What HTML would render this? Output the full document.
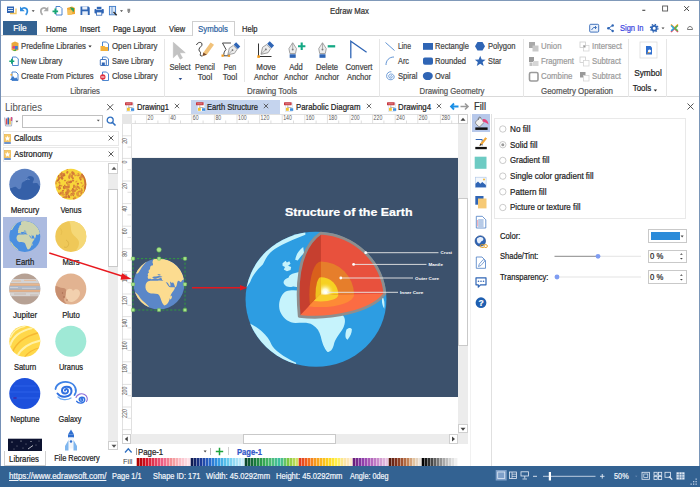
<!DOCTYPE html>
<html><head><meta charset="utf-8"><title>Edraw Max</title>
<style>
html,body{margin:0;padding:0}
body{width:700px;height:487px;position:relative;overflow:hidden;background:#fff;font-family:"Liberation Sans",sans-serif}
.t{position:absolute;white-space:nowrap;display:block;-webkit-text-stroke:.22px currentColor}
.b{position:absolute;display:block;overflow:visible}
</style></head><body>
<div class="b" style="left:0px;top:0px;width:700px;height:1.2px;background:#8099b9;"></div>
<div class="b" style="left:0px;top:0px;width:1.3px;height:487px;background:#7590b6;"></div>
<div class="b" style="left:698.8px;top:0px;width:1.2px;height:487px;background:#7a96b8;"></div>
<svg class="b" style="left:0px;top:0.7px;" width="140" height="20" viewBox="0 0 140 20">
<g>
<rect x="7" y="5.5" width="7" height="6.5" fill="#2f65b5"/><rect x="8" y="7" width="5" height="1" fill="#cfe0f5"/><rect x="8" y="9" width="5" height="1" fill="#cfe0f5"/>
<path d="M10 12.5h6v-5" fill="none" stroke="#f2c45a" stroke-width="1.3"/>
<path d="M21.2 8.2c3-2.6 7-1 6 3.2c-.3 1.2-1 2-1.6 2.4" fill="none" stroke="#2f8de0" stroke-width="1.7"/><path d="M20 5.5v4.8h4.8z" fill="#2f8de0"/>
<path d="M31.7 9.3h3l-1.5 1.8z" fill="#444"/>
<path d="M47 8.2c-3-2.6-7-1-6 3.2c.3 1.2 1 2 1.6 2.4" fill="none" stroke="#a9a9a9" stroke-width="1.7"/><path d="M48.3 5.5v4.8h-4.8z" fill="#a9a9a9"/>
<path d="M56 5.5h4l2 2v6.5h-6z" fill="#fff" stroke="#3a78c8" stroke-width=".9"/><path d="M52.5 10.3h5.6M55.3 7.5v5.6" stroke="#17a673" stroke-width="1.7"/>
<path d="M67 7l5-1.5l3 1.5v6l-7 1z" fill="#f0a732"/><path d="M70 6l4 1.2v3.5l-2-.4z" fill="#2aa05a"/><path d="M67.5 8.5l5 1l-.5 4l-4.500.6z" fill="#f6c25c"/>
<path d="M80.500 5.500h8l1.200 1.200v7.300h-9.200z" fill="#2f65b5"/><rect x="82.300" y="5.500" width="5" height="3" fill="#e9f0fa"/><rect x="82.300" y="10.300" width="5.500" height="3.700" fill="#e9f0fa"/>
<rect x="94.500" y="8" width="9.300" height="4.500" rx=".8" fill="#2f65b5"/><rect x="96.500" y="5.500" width="5.300" height="3" fill="#2f65b5" stroke="#fff" stroke-width=".6"/><rect x="96.500" y="11" width="5.300" height="3.200" fill="#fff" stroke="#2f65b5" stroke-width=".8"/>
<rect x="109.400" y="5.400" width="6.200" height="8.400" fill="#dbe7f6" stroke="#3a78c8" stroke-width=".9"/><path d="M112 6v7" stroke="#3a78c8" stroke-width=".7"/><path d="M113.500 11l3.200 3.200" stroke="#2b2b2b" stroke-width="1.400"/>
<path d="M120 9.300h3l-1.500 1.800z" fill="#444"/>
<path d="M127.400 8.300h2.800M127.400 9.700h2.800" stroke="#444" stroke-width=".8"/><path d="M127.300 10.600h3l-1.500 1.500z" fill="#444"/>
</g></svg>
<span class="t" style="left:330.00px;top:4.94px;font-size:9px;line-height:12px;color:#333;transform-origin:0 50%;transform:scaleX(0.8664);">Edraw Max</span>
<svg class="b" style="left:636px;top:0px;" width="64" height="20" viewBox="0 0 64 20"><path d="M6.300 10.300h3" stroke="#444" stroke-width="1.100"/><rect x="26.600" y="6" width="5" height="5" fill="none" stroke="#555" stroke-width=".9"/><path d="M48.200 6.200l4.800 4.800M53 6.200l-4.800 4.800" stroke="#444" stroke-width="1"/></svg>
<div class="b" style="left:2.5px;top:21px;width:34.5px;height:14.5px;background:#336292;"></div>
<span class="t" style="left:19.70px;top:22.44px;font-size:9px;line-height:12px;color:#fff;transform:translateX(-50%) scaleX(0.9309);">File</span>
<span class="t" style="left:46.00px;top:22.54px;font-size:9px;line-height:12px;color:#2a2a2a;transform-origin:0 50%;transform:scaleX(0.8622);">Home</span>
<span class="t" style="left:80.40px;top:22.54px;font-size:9px;line-height:12px;color:#2a2a2a;transform-origin:0 50%;transform:scaleX(0.8841);">Insert</span>
<span class="t" style="left:113.30px;top:22.54px;font-size:9px;line-height:12px;color:#2a2a2a;transform-origin:0 50%;transform:scaleX(0.8448);">Page Layout</span>
<span class="t" style="left:168.80px;top:22.54px;font-size:9px;line-height:12px;color:#2a2a2a;transform-origin:0 50%;transform:scaleX(0.8374);">View</span>
<span class="t" style="left:241.50px;top:22.54px;font-size:9px;line-height:12px;color:#2a2a2a;transform-origin:0 50%;transform:scaleX(0.8374);">Help</span>
<div class="b" style="left:1.2px;top:35.3px;width:697.6px;height:62.2px;background:#fff;border:1px solid #d9d9d9;box-sizing:border-box;border-left:none;border-right:none"></div>
<div class="b" style="left:191.8px;top:21px;width:43.4px;height:15.4px;background:#fff;border:1px solid #cfcfcf;box-sizing:border-box;border-bottom:none"></div>
<span class="t" style="left:198.00px;top:22.54px;font-size:9px;line-height:12px;color:#2c5fa0;transform-origin:0 50%;transform:scaleX(0.8693);">Symbols</span>
<svg class="b" style="left:592px;top:21px;" width="108" height="15" viewBox="0 0 108 15">
<rect x="-2.300" y="3.300" width="9" height="7.800" rx="1" fill="#eaf1fb" stroke="#2f65b5" stroke-width=".9"/><path d="M-.5 9l2-2.500h2.500M3 5l1.500 1.500l-1.500 1.500" fill="none" stroke="#2f65b5" stroke-width=".9"/>
<path d="M20.500 4.500l-4 2.700l4 2.700" fill="none" stroke="#2f65b5" stroke-width=".9"/><circle cx="20.700" cy="4.500" r="1.200" fill="#2f65b5"/><circle cx="16.300" cy="7.200" r="1.200" fill="#2f65b5"/><circle cx="20.700" cy="10" r="1.200" fill="#2f65b5"/>
<circle cx="62.200" cy="7.200" r="2.400" fill="none" stroke="#2f65b5" stroke-width="1.800"/><circle cx="62.200" cy="7.200" r="3.800" fill="none" stroke="#2f65b5" stroke-width="1.200" stroke-dasharray="1.500 1.480"/>
<path d="M69.500 6.500h3l-1.500 1.700z" fill="#444"/>
<path d="M79 3.500l3.500 3.500l3.500-3.500" fill="none" stroke="#f39c1f" stroke-width="1.600"/><path d="M79 11l3.500-3.500l3.500 3.500" fill="none" stroke="#e64a6a" stroke-width="1.600"/><path d="M79.200 4.500l2.700 2.700l-2.700 2.700" fill="none" stroke="#29a8e0" stroke-width="1.500"/><path d="M85.800 4.500l-2.700 2.700l2.700 2.700" fill="none" stroke="#59b84a" stroke-width="1.500"/>
<path d="M95.500 8.500c0-2 1.200-3 2.500-3s2.500 1 2.500 3z" fill="none" stroke="#555" stroke-width=".8"/>
</svg>
<span class="t" style="left:619.60px;top:22.24px;font-size:9px;line-height:12px;color:#3a44e0;transform-origin:0 50%;transform:scaleX(0.8351);">Sign In</span>
<div class="b" style="left:164px;top:38.8px;width:1px;height:58px;background:#e6e6e6;"></div>
<div class="b" style="left:379px;top:38.8px;width:1px;height:58px;background:#e6e6e6;"></div>
<div class="b" style="left:522.5px;top:38.8px;width:1px;height:58px;background:#e6e6e6;"></div>
<div class="b" style="left:628px;top:38.8px;width:1px;height:58px;background:#e6e6e6;"></div>
<div class="b" style="left:665.5px;top:38.8px;width:1px;height:58px;background:#e6e6e6;"></div>
<div class="b" style="left:244px;top:38.8px;width:1px;height:43.7px;background:#e6e6e6;"></div>
<span class="t" style="left:21.00px;top:39.94px;font-size:9px;line-height:12px;color:#444;transform-origin:0 50%;transform:scaleX(0.8604);">Predefine Libraries</span>
<span class="t" style="left:21.00px;top:54.94px;font-size:9px;line-height:12px;color:#444;transform-origin:0 50%;transform:scaleX(0.8643);">New Library</span>
<span class="t" style="left:21.00px;top:69.94px;font-size:9px;line-height:12px;color:#444;transform-origin:0 50%;transform:scaleX(0.8500);">Create From Pictures</span>
<span class="t" style="left:112.00px;top:39.94px;font-size:9px;line-height:12px;color:#444;transform-origin:0 50%;transform:scaleX(0.8745);">Open Library</span>
<span class="t" style="left:112.00px;top:54.94px;font-size:9px;line-height:12px;color:#444;transform-origin:0 50%;transform:scaleX(0.8253);">Save Library</span>
<span class="t" style="left:112.00px;top:69.94px;font-size:9px;line-height:12px;color:#444;transform-origin:0 50%;transform:scaleX(0.8581);">Close Library</span>
<span class="t" style="left:84.50px;top:84.94px;font-size:9px;line-height:12px;color:#555;transform:translateX(-50%) scaleX(0.8547);">Libraries</span>
<span class="t" style="left:180.00px;top:60.94px;font-size:9px;line-height:12px;color:#444;transform:translateX(-50%) scaleX(0.8395);">Select</span>
<span class="t" style="left:205.00px;top:60.94px;font-size:9px;line-height:12px;color:#444;transform:translateX(-50%) scaleX(0.8159);">Pencil</span>
<span class="t" style="left:205.00px;top:70.94px;font-size:9px;line-height:12px;color:#444;transform:translateX(-50%) scaleX(0.8782);">Tool</span>
<span class="t" style="left:230.00px;top:60.94px;font-size:9px;line-height:12px;color:#444;transform:translateX(-50%) scaleX(0.7805);">Pen</span>
<span class="t" style="left:230.00px;top:70.94px;font-size:9px;line-height:12px;color:#444;transform:translateX(-50%) scaleX(0.8782);">Tool</span>
<span class="t" style="left:265.50px;top:60.94px;font-size:9px;line-height:12px;color:#444;transform:translateX(-50%) scaleX(0.8860);">Move</span>
<span class="t" style="left:265.50px;top:70.94px;font-size:9px;line-height:12px;color:#444;transform:translateX(-50%) scaleX(0.8416);">Anchor</span>
<span class="t" style="left:296.00px;top:60.94px;font-size:9px;line-height:12px;color:#444;transform:translateX(-50%) scaleX(0.8430);">Add</span>
<span class="t" style="left:296.00px;top:70.94px;font-size:9px;line-height:12px;color:#444;transform:translateX(-50%) scaleX(0.8416);">Anchor</span>
<span class="t" style="left:327.00px;top:60.94px;font-size:9px;line-height:12px;color:#444;transform:translateX(-50%) scaleX(0.8456);">Delete</span>
<span class="t" style="left:327.00px;top:70.94px;font-size:9px;line-height:12px;color:#444;transform:translateX(-50%) scaleX(0.8416);">Anchor</span>
<span class="t" style="left:359.00px;top:60.94px;font-size:9px;line-height:12px;color:#444;transform:translateX(-50%) scaleX(0.8568);">Convert</span>
<span class="t" style="left:359.00px;top:70.94px;font-size:9px;line-height:12px;color:#444;transform:translateX(-50%) scaleX(0.8416);">Anchor</span>
<span class="t" style="left:272.00px;top:84.94px;font-size:9px;line-height:12px;color:#555;transform:translateX(-50%) scaleX(0.8871);">Drawing Tools</span>
<span class="t" style="left:397.50px;top:39.94px;font-size:9px;line-height:12px;color:#444;transform-origin:0 50%;transform:scaleX(0.7640);">Line</span>
<span class="t" style="left:397.50px;top:54.94px;font-size:9px;line-height:12px;color:#444;transform-origin:0 50%;transform:scaleX(0.8148);">Arc</span>
<span class="t" style="left:397.50px;top:69.94px;font-size:9px;line-height:12px;color:#444;transform-origin:0 50%;transform:scaleX(0.8474);">Spiral</span>
<span class="t" style="left:435.00px;top:39.94px;font-size:9px;line-height:12px;color:#444;transform-origin:0 50%;transform:scaleX(0.8389);">Rectangle</span>
<span class="t" style="left:435.00px;top:54.94px;font-size:9px;line-height:12px;color:#444;transform-origin:0 50%;transform:scaleX(0.8485);">Rounded</span>
<span class="t" style="left:435.00px;top:69.94px;font-size:9px;line-height:12px;color:#444;transform-origin:0 50%;transform:scaleX(0.8376);">Oval</span>
<span class="t" style="left:487.50px;top:39.94px;font-size:9px;line-height:12px;color:#444;transform-origin:0 50%;transform:scaleX(0.8455);">Polygon</span>
<span class="t" style="left:487.50px;top:54.94px;font-size:9px;line-height:12px;color:#444;transform-origin:0 50%;transform:scaleX(0.8179);">Star</span>
<span class="t" style="left:452.00px;top:84.94px;font-size:9px;line-height:12px;color:#555;transform:translateX(-50%) scaleX(0.8664);">Drawing Geometry</span>
<span class="t" style="left:540.70px;top:39.94px;font-size:9px;line-height:12px;color:#9a9a9a;transform-origin:0 50%;transform:scaleX(0.8717);">Union</span>
<span class="t" style="left:540.70px;top:54.94px;font-size:9px;line-height:12px;color:#9a9a9a;transform-origin:0 50%;transform:scaleX(0.8568);">Fragment</span>
<span class="t" style="left:540.70px;top:69.94px;font-size:9px;line-height:12px;color:#9a9a9a;transform-origin:0 50%;transform:scaleX(0.8745);">Combine</span>
<span class="t" style="left:592.00px;top:39.94px;font-size:9px;line-height:12px;color:#9a9a9a;transform-origin:0 50%;transform:scaleX(0.8692);">Intersect</span>
<span class="t" style="left:592.00px;top:54.94px;font-size:9px;line-height:12px;color:#9a9a9a;transform-origin:0 50%;transform:scaleX(0.8652);">Subtract</span>
<span class="t" style="left:592.00px;top:69.94px;font-size:9px;line-height:12px;color:#9a9a9a;transform-origin:0 50%;transform:scaleX(0.8652);">Subtract</span>
<span class="t" style="left:577.00px;top:84.94px;font-size:9px;line-height:12px;color:#555;transform:translateX(-50%) scaleX(0.8830);">Geometry Operation</span>
<span class="t" style="left:647.60px;top:67.34px;font-size:9px;line-height:12px;color:#222;transform:translateX(-50%) scaleX(0.9163);">Symbol</span>
<span class="t" style="left:642.00px;top:82.44px;font-size:9px;line-height:12px;color:#222;transform:translateX(-50%) scaleX(0.8805);">Tools</span>
<svg class="b" style="left:0px;top:0px;" width="700" height="98" viewBox="0 0 700 98">
<!-- libraries group small icons -->
<path d="M11.500 43l3.500-1.500l3.500 1.500v7l-3.500 1.300l-3.500-1.300z" fill="#e9a83c"/><circle cx="13.800" cy="47.300" r="1.500" fill="#e0457b"/><rect x="15" y="46" width="2.800" height="3.500" fill="#3b7fd4"/><path d="M12.500 51h3.500v-2z" fill="#52b043"/>
<path d="M88.300 45.500h3.400l-1.700 2z" fill="#333"/>
<path d="M12.500 57h3.800l2 2v6.500h-5.800z" fill="#fff" stroke="#3a78c8" stroke-width=".9"/><path d="M9.300 61.200h5M11.800 58.700v5" stroke="#17a673" stroke-width="1.600"/>
<path d="M12 72h4l2 2v6.500h-6z" fill="#fff" stroke="#3a78c8" stroke-width=".9"/><path d="M10 80l3-4l2 2.500l1.200-1.200l1.800 2.700z" fill="#3a78c8"/><circle cx="11.300" cy="74.800" r="1" fill="#e9a83c"/>
<path d="M102.500 42h4l2 2v6.500h-6z" fill="#fff" stroke="#3a78c8" stroke-width=".9"/><path d="M100.500 46h4l1 1h2.500v4h-7.500z" fill="#f3b13b"/>
<path d="M102.500 57h4l2 2v6.500h-6z" fill="#fff" stroke="#3a78c8" stroke-width=".9"/><rect x="100.300" y="59.500" width="6" height="6" rx=".6" fill="#fff" stroke="#2f65b5" stroke-width=".9"/><rect x="101.800" y="62.500" width="3" height="2.500" fill="#2f65b5"/>
<path d="M102.500 72h4l2 2v6.500h-6z" fill="#fff" stroke="#3a78c8" stroke-width=".9"/><circle cx="102.800" cy="77" r="2.700" fill="#e0313f"/><path d="M101.200 77h3.200" stroke="#fff" stroke-width="1"/>
<!-- select -->
<path d="M173.300 42.300v15.500l4-3.800l2.800 5.200l2.400-1.200l-2.800-5.200h5.600z" fill="#c2c2c2" stroke="#b0b0b0" stroke-width=".4"/>
<path d="M178.600 78h3.600l-1.800 2.200z" fill="#2f4f8f"/>
<!-- pencil tool -->
<path d="M196.500 45c1-3 5-3.500 5.500-1s-3 3-3 5.500s2 2 1.500 4s-.5 2.500 2 2.500" fill="none" stroke="#222" stroke-width=".9"/><path d="M202.500 56l.9-3.600l7.200-10l3.400 2.400l-7.200 10z" fill="#f1c27a"/><path d="M202.500 56l.9-3.600l3.400 2.400z" fill="#7a4a2a"/>
<!-- pen tool -->
<path d="M222.500 43h8.500M222.500 43l3.500 6.500c-2 2-2.500 4.500-2 6.300h6" fill="none" stroke="#333" stroke-width=".9"/><rect x="221.500" y="54.500" width="2.300" height="2.300" fill="#f39c1f"/><rect x="227.800" y="54.500" width="2.300" height="2.300" fill="#f39c1f"/>
<g transform="translate(227.8 54.8) rotate(225) scale(1.05)"><path d="M0 0L3.500 5.500L2.600 10H-2.600L-3.500 5.500z" fill="#ececec" stroke="#8a8a8a" stroke-width=".7" stroke-linejoin="round"/><path d="M0 .5V5.500" stroke="#8a8a8a" stroke-width=".6"/><circle cx="0" cy="6.300" r=".9" fill="#7a7a7a"/><rect x="-2.800" y="10.700" width="5.600" height="3.300" fill="#2f65b5"/></g>
<!-- move anchor -->
<path d="M258.500 43.500v13h13" fill="none" stroke="#333" stroke-width="1"/><rect x="257.300" y="55.300" width="2.600" height="2.600" fill="#f39c1f"/>
<g transform="translate(261 54.3) rotate(225) scale(1.1)"><path d="M0 0L3.500 5.500L2.600 10H-2.600L-3.500 5.500z" fill="#ececec" stroke="#8a8a8a" stroke-width=".7" stroke-linejoin="round"/><path d="M0 .5V5.500" stroke="#8a8a8a" stroke-width=".6"/><circle cx="0" cy="6.300" r=".9" fill="#7a7a7a"/><rect x="-2.800" y="10.700" width="5.600" height="3.300" fill="#2f65b5"/></g>
<!-- add anchor -->
<g transform="translate(292.7 42.7) rotate(0) scale(1.08)"><path d="M0 0L3.500 5.500L2.600 10H-2.600L-3.500 5.500z" fill="#ececec" stroke="#8a8a8a" stroke-width=".7" stroke-linejoin="round"/><path d="M0 .5V5.500" stroke="#8a8a8a" stroke-width=".6"/><circle cx="0" cy="6.300" r=".9" fill="#7a7a7a"/><rect x="-2.800" y="10.700" width="5.600" height="3.300" fill="#2f65b5"/></g>
<path d="M298 46.200h7.400M301.700 42.500v7.400" stroke="#14a884" stroke-width="2.100"/>
<!-- delete anchor -->
<g transform="translate(322.5 42.7) rotate(0) scale(1.08)"><path d="M0 0L3.500 5.500L2.600 10H-2.600L-3.500 5.500z" fill="#ececec" stroke="#8a8a8a" stroke-width=".7" stroke-linejoin="round"/><path d="M0 .5V5.500" stroke="#8a8a8a" stroke-width=".6"/><circle cx="0" cy="6.300" r=".9" fill="#7a7a7a"/><rect x="-2.800" y="10.700" width="5.600" height="3.300" fill="#2f65b5"/></g>
<path d="M327.700 46.300h7.500" stroke="#14a884" stroke-width="2.300"/>
<!-- convert anchor -->
<path d="M350.800 58.300v-17l15.800 11" fill="none" stroke="#2f65b5" stroke-width="1.300"/>
<!-- geometry -->
<path d="M385.500 42.500l9 8" stroke="#3a78c8" stroke-width=".8"/>
<path d="M386 65c0-4.500 3-8 8-8" fill="none" stroke="#3a78c8" stroke-width=".8"/>
<path d="M390.500 76.500c0-1.200 1.800-1.200 1.800.2c0 2-3.600 2-3.600-.5c0-3 5.500-3 5.500.8c0 3.500-7 4-7.600-.5c-.3-3 2-5 4.800-4.800" fill="none" stroke="#3a78c8" stroke-width=".7"/>
<rect x="423" y="43" width="10" height="6.800" fill="#2f65b5"/>
<rect x="423" y="57.500" width="10" height="7.300" rx="1.800" fill="#2f65b5"/>
<ellipse cx="427.800" cy="76" rx="5" ry="4.100" fill="#2f65b5"/>
<path d="M477.500 42h5l2.500 4.300l-2.500 4.300h-5l-2.500-4.300z" fill="#2f65b5"/>
<path d="M480.200 55.800l1.500 3.600l3.900.3l-3 2.400l1 3.800l-3.400-2.100l-3.400 2.100l1-3.800l-3-2.400l3.900-.3z" fill="#2f65b5"/>
<!-- geometry op (disabled) -->
<rect x="529" y="42" width="6" height="6" fill="#a9a9a9"/><rect x="532.500" y="45.500" width="6" height="6" fill="#c9c9c9"/>
<rect x="529" y="57" width="5" height="5" fill="#9a9a9a"/><rect x="533" y="61" width="5.500" height="5" fill="#d6d6d6"/><rect x="529.500" y="62.500" width="3" height="3.500" fill="#c2c2c2"/>
<rect x="529.500" y="72.500" width="8.500" height="8.500" rx="1.500" fill="#fff" stroke="#9a9a9a" stroke-width="1.600"/>
<rect x="580" y="42" width="5.500" height="5.500" fill="#fff" stroke="#cdcdcd" stroke-width=".8"/><rect x="583.500" y="45.500" width="5.500" height="5.500" fill="#fff" stroke="#d6d6d6" stroke-width=".8"/><rect x="583.500" y="45.500" width="2" height="2" fill="#999"/>
<rect x="580" y="57" width="5.500" height="5.500" fill="#fff" stroke="#cdcdcd" stroke-width=".8"/><rect x="583.500" y="60.500" width="5.500" height="5.500" fill="#fff" stroke="#d6d6d6" stroke-width=".8"/>
<rect x="580" y="72" width="5.500" height="5.500" fill="#9a9a9a"/><rect x="583.500" y="75.500" width="5.500" height="5.500" fill="#fff" stroke="#d6d6d6" stroke-width=".8"/>
<!-- symbol tools -->
<rect x="640" y="42" width="17" height="16" fill="#fff" stroke="#dcdcdc" stroke-width=".8"/>
<path d="M646 46h4.500l1.500 1.500v7h-6z" fill="#2f6fd0"/><circle cx="649.500" cy="51" r="1.600" fill="#fff"/><path d="M646.500 53.500l2-1.500l1.500 1z" fill="#f39c1f"/>
<path d="M653.700 89.500h3.400l-1.700 2.100z" fill="#222"/>
</svg>
<div class="b" style="left:191.3px;top:99.5px;width:89px;height:14px;background:#c5d4ee;"></div>
<svg class="b" style="left:125.1px;top:101.500px" width="10" height="10" viewBox="0 0 10 10"><rect x="1.500" y="1" width="7" height="8.300" fill="#fff" stroke="#cfdcee" stroke-width=".6"/><rect x="0" y=".3" width="7.600" height="3" rx=".5" fill="#c8373f"/><path d="M1.200 1.800h5.200" stroke="#f0b9bd" stroke-width=".6"/><path d="M3.800 3.300v2.200M3.300 5.500h4v1" fill="none" stroke="#8a8a8a" stroke-width=".6"/><rect x="2" y="5.800" width="2.800" height="3" fill="#f2c332"/><rect x="6" y="6.300" width="3.200" height="2.500" fill="#3d8fe0"/></svg>
<span class="t" style="left:136.90px;top:100.54px;font-size:9px;line-height:12px;color:#222;transform-origin:0 50%;transform:scaleX(0.8417);">Drawing1</span>
<svg class="b" style="left:174px;top:103.300px" width="6" height="6" viewBox="0 0 6 6"><path d="M.8.800l4.400 4.400M5.200.800l-4.400 4.400" stroke="#444" stroke-width=".8"/></svg>
<svg class="b" style="left:195.6px;top:101.500px" width="10" height="10" viewBox="0 0 10 10"><rect x="1.500" y="1" width="7" height="8.300" fill="#fff" stroke="#cfdcee" stroke-width=".6"/><rect x="0" y=".3" width="7.600" height="3" rx=".5" fill="#c8373f"/><path d="M1.200 1.800h5.200" stroke="#f0b9bd" stroke-width=".6"/><path d="M3.800 3.300v2.200M3.300 5.500h4v1" fill="none" stroke="#8a8a8a" stroke-width=".6"/><rect x="2" y="5.800" width="2.800" height="3" fill="#f2c332"/><rect x="6" y="6.300" width="3.200" height="2.500" fill="#3d8fe0"/></svg>
<span class="t" style="left:206.80px;top:100.54px;font-size:9px;line-height:12px;color:#222;transform-origin:0 50%;transform:scaleX(0.8426);">Earth Structure</span>
<svg class="b" style="left:263px;top:103.300px" width="6" height="6" viewBox="0 0 6 6"><path d="M.8.800l4.400 4.400M5.200.800l-4.400 4.400" stroke="#444" stroke-width=".8"/></svg>
<svg class="b" style="left:284.1px;top:101.500px" width="10" height="10" viewBox="0 0 10 10"><rect x="1.500" y="1" width="7" height="8.300" fill="#fff" stroke="#cfdcee" stroke-width=".6"/><rect x="0" y=".3" width="7.600" height="3" rx=".5" fill="#c8373f"/><path d="M1.200 1.800h5.200" stroke="#f0b9bd" stroke-width=".6"/><path d="M3.800 3.300v2.200M3.300 5.500h4v1" fill="none" stroke="#8a8a8a" stroke-width=".6"/><rect x="2" y="5.800" width="2.800" height="3" fill="#f2c332"/><rect x="6" y="6.300" width="3.200" height="2.500" fill="#3d8fe0"/></svg>
<span class="t" style="left:295.50px;top:100.54px;font-size:9px;line-height:12px;color:#222;transform-origin:0 50%;transform:scaleX(0.8712);">Parabolic Diagram</span>
<svg class="b" style="left:366px;top:103.300px" width="6" height="6" viewBox="0 0 6 6"><path d="M.8.800l4.400 4.400M5.200.800l-4.400 4.400" stroke="#444" stroke-width=".8"/></svg>
<svg class="b" style="left:387.1px;top:101.500px" width="10" height="10" viewBox="0 0 10 10"><rect x="1.500" y="1" width="7" height="8.300" fill="#fff" stroke="#cfdcee" stroke-width=".6"/><rect x="0" y=".3" width="7.600" height="3" rx=".5" fill="#c8373f"/><path d="M1.200 1.800h5.200" stroke="#f0b9bd" stroke-width=".6"/><path d="M3.800 3.300v2.200M3.300 5.500h4v1" fill="none" stroke="#8a8a8a" stroke-width=".6"/><rect x="2" y="5.800" width="2.800" height="3" fill="#f2c332"/><rect x="6" y="6.300" width="3.200" height="2.500" fill="#3d8fe0"/></svg>
<span class="t" style="left:398.00px;top:100.54px;font-size:9px;line-height:12px;color:#222;transform-origin:0 50%;transform:scaleX(0.8680);">Drawing4</span>
<svg class="b" style="left:436px;top:103.300px" width="6" height="6" viewBox="0 0 6 6"><path d="M.8.800l4.400 4.400M5.200.800l-4.400 4.400" stroke="#444" stroke-width=".8"/></svg>
<svg class="b" style="left:450px;top:102px;" width="20" height="9" viewBox="0 0 20 9"><path d="M1 4.500h7.500M4 1.500l-3 3l3 3" fill="none" stroke="#1b8fe6" stroke-width="1.800"/><path d="M10.500 4.500h7.500M15 1.500l3 3l-3 3" fill="none" stroke="#9a9a9a" stroke-width="1.600"/></svg>
<span class="t" style="left:474.00px;top:100.20px;font-size:10px;line-height:14px;color:#333;transform-origin:0 50%;transform:scaleX(0.9394);">Fill</span>
<svg class="b" style="left:686px;top:102px;" width="9" height="9" viewBox="0 0 9 9"><path d="M1.500 1.500l6 6M7.500 1.500l-6 6" stroke="#444" stroke-width=".9"/></svg>
<span class="t" style="left:5.00px;top:100.38px;font-size:10.5px;line-height:14px;color:#505050;transform-origin:0 50%;transform:scaleX(0.9188);-webkit-text-stroke:0;">Libraries</span>
<svg class="b" style="left:106px;top:103px;" width="9" height="9" viewBox="0 0 9 9"><path d="M1.200 1.200l6 6M7.200 1.200l-6 6" stroke="#444" stroke-width=".9"/></svg>
<svg class="b" style="left:3px;top:115px;" width="18" height="12" viewBox="0 0 18 12"><path d="M1.500 2.500l1 8.500h6l1-8.500" fill="#e9eef7" stroke="#7f8fa8" stroke-width=".6"/><rect x="2.800" y="3.500" width="1.500" height="6" fill="#e04a4a"/><rect x="4.500" y="2.500" width="1.500" height="7" fill="#2f65b5"/><rect x="6.200" y="3.500" width="1.500" height="6" fill="#f2b632"/><rect x="7.800" y="2" width="1.300" height="4" fill="#d94a8a"/><path d="M12.500 5.800h2.800l-1.400 1.600z" fill="#555"/></svg>
<div class="b" style="left:22px;top:114.5px;width:81px;height:13.5px;background:#fff;border:1px solid #c0c0c0;box-sizing:border-box;"></div>
<svg class="b" style="left:96px;top:119px;" width="6" height="4" viewBox="0 0 6 4"><path d="M.8.800h3l-1.500 1.700z" fill="#555"/></svg>
<svg class="b" style="left:106px;top:115.5px;" width="11" height="11" viewBox="0 0 11 11"><circle cx="4.200" cy="4.200" r="3" fill="none" stroke="#2f6fc0" stroke-width="1.300"/><path d="M6.500 6.500l3 3" stroke="#2f6fc0" stroke-width="1.600"/></svg>
<div class="b" style="left:2.5px;top:131px;width:116px;height:14.5px;background:#fff;border:1px solid #e8e8e8;box-sizing:border-box;"></div>
<svg class="b" style="left:4px;top:133.5px" width="7" height="10" viewBox="0 0 7 10"><rect x=".2" y=".2" width="6.600" height="7.600" fill="#f5c96b" stroke="#e2a93a" stroke-width=".4"/><path d="M3.500 1.700l.8 1.700l1.800.2l-1.300 1.300l.3 1.800l-1.600-.9l-1.600.9l.3-1.800l-1.300-1.300l1.800-.2z" fill="#fff"/><rect x=".2" y="8.300" width="6.600" height="1.400" fill="#2f65b5"/></svg>
<span class="t" style="left:14.40px;top:132.22px;font-size:9.5px;line-height:12px;color:#222;transform-origin:0 50%;transform:scaleX(0.8100);">Callouts</span>
<svg class="b" style="left:108px;top:135.3px" width="6" height="6" viewBox="0 0 6 6"><path d="M.6.600l4.800 4.800M5.400.600l-4.800 4.800" stroke="#333" stroke-width=".8"/></svg>
<div class="b" style="left:2.5px;top:147px;width:116px;height:14.5px;background:#fff;border:1px solid #e8e8e8;box-sizing:border-box;"></div>
<svg class="b" style="left:4px;top:149.5px" width="7" height="10" viewBox="0 0 7 10"><rect x=".2" y=".2" width="6.600" height="7.600" fill="#f5c96b" stroke="#e2a93a" stroke-width=".4"/><path d="M3.500 1.700l.8 1.700l1.800.2l-1.300 1.300l.3 1.800l-1.600-.9l-1.600.9l.3-1.800l-1.300-1.300l1.800-.2z" fill="#fff"/><rect x=".2" y="8.300" width="6.600" height="1.400" fill="#2f65b5"/></svg>
<span class="t" style="left:14.40px;top:148.22px;font-size:9.5px;line-height:12px;color:#222;transform-origin:0 50%;transform:scaleX(0.8479);">Astronomy</span>
<svg class="b" style="left:108px;top:151.3px" width="6" height="6" viewBox="0 0 6 6"><path d="M.6.600l4.800 4.800M5.400.600l-4.800 4.800" stroke="#333" stroke-width=".8"/></svg>
<div class="b" style="left:108.3px;top:163px;width:10.2px;height:287px;background:#ececec;"></div>
<div class="b" style="left:108.3px;top:163px;width:10.2px;height:10.8px;background:#fff;border:1px solid #cfcfcf;box-sizing:border-box;"></div>
<svg class="b" style="left:110.5px;top:166px;" width="6" height="5" viewBox="0 0 6 5"><path d="M.5 3.800l2.500-3l2.500 3z" fill="#555"/></svg>
<div class="b" style="left:108.3px;top:189px;width:10.2px;height:78px;background:#fff;border:1px solid #c9c9c9;box-sizing:border-box;"></div>
<div class="b" style="left:108.3px;top:440.5px;width:10.2px;height:9.8px;background:#fff;border:1px solid #cfcfcf;box-sizing:border-box;"></div>
<svg class="b" style="left:110.5px;top:443.5px;" width="6" height="5" viewBox="0 0 6 5"><path d="M.5.800h5l-2.500 3z" fill="#555"/></svg>
<div class="b" style="left:2.8px;top:216.8px;width:44.5px;height:50.8px;background:#acbbe0;"></div>
<svg class="b" style="left:0px;top:0px;" width="120" height="466" viewBox="0 0 120 466">
<defs>
<clipPath id="cM"><circle cx="24.800" cy="184.200" r="15.500"/></clipPath>
<clipPath id="cV"><circle cx="70.800" cy="184.200" r="15.500"/></clipPath>
<clipPath id="cE"><circle cx="24.800" cy="236.400" r="15.500"/></clipPath>
<clipPath id="cMa"><circle cx="70.800" cy="236.400" r="15.500"/></clipPath>
<clipPath id="cJ"><circle cx="24.800" cy="289" r="15.500"/></clipPath>
<clipPath id="cP"><circle cx="70.800" cy="289" r="15.500"/></clipPath>
<clipPath id="cS"><circle cx="24.800" cy="341.300" r="15.500"/></clipPath>
<clipPath id="cN"><circle cx="24.800" cy="393.600" r="15.500"/></clipPath>
</defs>
<!-- Mercury -->
<circle cx="24.800" cy="184.200" r="15.500" fill="#5b80c0"/>
<g clip-path="url(#cM)"><path d="M9 188c3 1 5-2 7-1s2 3 4 2s1-4 2-6s3-1 4-3s2-4 4-4s4 1 4 3s-2 3-1 4s4-1 5 1s2 3 3 3v15h-32z" fill="#3560a8"/><path d="M26 180c1-1.500 3-1.500 3.500 0" fill="none" stroke="#7f9fd6" stroke-width=".8"/></g>
<!-- Venus -->
<circle cx="70.800" cy="184.200" r="15.500" fill="#f8d63a"/>
<g clip-path="url(#cV)"><ellipse cx="59.7" cy="187.6" rx="1.9" ry="0.9" fill="#d47c38" transform="rotate(47 59.7 187.6)"/><ellipse cx="74.4" cy="174.1" rx="1.5" ry="0.7" fill="#e29a3a" transform="rotate(77 74.4 174.1)"/><ellipse cx="78.0" cy="193.0" rx="1.9" ry="1.1" fill="#e29a3a" transform="rotate(115 78.0 193.0)"/><ellipse cx="63.9" cy="174.2" rx="0.9" ry="0.5" fill="#d9873a" transform="rotate(15 63.9 174.2)"/><ellipse cx="85.0" cy="187.4" rx="1.5" ry="1.2" fill="#cc7036" transform="rotate(112 85.0 187.4)"/><ellipse cx="65.0" cy="180.5" rx="1.0" ry="0.8" fill="#d9873a" transform="rotate(169 65.0 180.5)"/><ellipse cx="81.6" cy="190.6" rx="1.2" ry="1.0" fill="#d9873a" transform="rotate(65 81.6 190.6)"/><ellipse cx="67.8" cy="191.0" rx="1.1" ry="0.6" fill="#d9873a" transform="rotate(102 67.8 191.0)"/><ellipse cx="77.3" cy="189.4" rx="0.8" ry="0.5" fill="#d9873a" transform="rotate(54 77.3 189.4)"/><ellipse cx="74.5" cy="198.5" rx="1.3" ry="1.4" fill="#e29a3a" transform="rotate(107 74.5 198.5)"/><ellipse cx="81.8" cy="189.6" rx="1.7" ry="0.7" fill="#d9873a" transform="rotate(79 81.8 189.6)"/><ellipse cx="63.3" cy="197.4" rx="1.7" ry="0.6" fill="#d47c38" transform="rotate(180 63.3 197.4)"/><ellipse cx="73.9" cy="186.4" rx="1.7" ry="0.7" fill="#d47c38" transform="rotate(114 73.9 186.4)"/><ellipse cx="55.4" cy="183.3" rx="1.7" ry="0.9" fill="#e29a3a" transform="rotate(29 55.4 183.3)"/><ellipse cx="58.6" cy="193.7" rx="0.7" ry="1.3" fill="#cc7036" transform="rotate(5 58.6 193.7)"/><ellipse cx="73.2" cy="193.6" rx="1.8" ry="1.1" fill="#d9873a" transform="rotate(10 73.2 193.6)"/><ellipse cx="77.9" cy="183.7" rx="1.0" ry="1.2" fill="#cc7036" transform="rotate(75 77.9 183.7)"/><ellipse cx="67.6" cy="187.0" rx="1.0" ry="1.1" fill="#d9873a" transform="rotate(153 67.6 187.0)"/><ellipse cx="62.5" cy="193.2" rx="0.9" ry="1.0" fill="#d47c38" transform="rotate(98 62.5 193.2)"/><ellipse cx="73.3" cy="189.8" rx="1.9" ry="1.2" fill="#d47c38" transform="rotate(48 73.3 189.8)"/><ellipse cx="77.5" cy="194.5" rx="1.4" ry="1.1" fill="#e29a3a" transform="rotate(123 77.5 194.5)"/><ellipse cx="62.8" cy="178.1" rx="0.8" ry="0.5" fill="#cc7036" transform="rotate(61 62.8 178.1)"/><ellipse cx="70.2" cy="174.5" rx="1.2" ry="1.3" fill="#e29a3a" transform="rotate(75 70.2 174.5)"/><ellipse cx="56.0" cy="182.3" rx="2.0" ry="0.6" fill="#e29a3a" transform="rotate(143 56.0 182.3)"/><ellipse cx="63.9" cy="174.2" rx="0.8" ry="0.7" fill="#d47c38" transform="rotate(4 63.9 174.2)"/><ellipse cx="79.8" cy="188.4" rx="1.0" ry="0.5" fill="#cc7036" transform="rotate(94 79.8 188.4)"/><ellipse cx="55.8" cy="181.2" rx="0.8" ry="0.6" fill="#e29a3a" transform="rotate(84 55.8 181.2)"/><ellipse cx="63.7" cy="173.5" rx="1.5" ry="0.6" fill="#d9873a" transform="rotate(4 63.7 173.5)"/><ellipse cx="61.6" cy="185.7" rx="1.1" ry="0.5" fill="#d9873a" transform="rotate(123 61.6 185.7)"/><ellipse cx="78.7" cy="187.7" rx="0.9" ry="0.6" fill="#e29a3a" transform="rotate(139 78.7 187.7)"/><ellipse cx="68.6" cy="186.6" rx="1.9" ry="1.2" fill="#d47c38" transform="rotate(87 68.6 186.6)"/><ellipse cx="63.1" cy="194.5" rx="1.9" ry="1.3" fill="#e29a3a" transform="rotate(7 63.1 194.5)"/><ellipse cx="78.5" cy="175.3" rx="1.5" ry="0.8" fill="#d9873a" transform="rotate(155 78.5 175.3)"/><ellipse cx="75.0" cy="186.2" rx="0.9" ry="0.7" fill="#e29a3a" transform="rotate(84 75.0 186.2)"/><ellipse cx="60.6" cy="192.8" rx="1.5" ry="0.9" fill="#d9873a" transform="rotate(132 60.6 192.8)"/><ellipse cx="70.8" cy="181.5" rx="1.5" ry="0.9" fill="#d47c38" transform="rotate(178 70.8 181.5)"/><ellipse cx="81.2" cy="193.1" rx="1.6" ry="0.9" fill="#d9873a" transform="rotate(94 81.2 193.1)"/><ellipse cx="66.8" cy="196.3" rx="1.0" ry="0.7" fill="#cc7036" transform="rotate(168 66.8 196.3)"/><ellipse cx="80.7" cy="179.6" rx="1.0" ry="0.9" fill="#cc7036" transform="rotate(50 80.7 179.6)"/><ellipse cx="61.6" cy="173.8" rx="1.7" ry="0.7" fill="#d47c38" transform="rotate(98 61.6 173.8)"/><ellipse cx="73.6" cy="198.8" rx="1.0" ry="0.6" fill="#cc7036" transform="rotate(10 73.6 198.8)"/><ellipse cx="67.2" cy="169.5" rx="1.1" ry="0.7" fill="#e29a3a" transform="rotate(120 67.2 169.5)"/><ellipse cx="69.7" cy="191.3" rx="1.2" ry="1.1" fill="#e29a3a" transform="rotate(172 69.7 191.3)"/><ellipse cx="65.1" cy="197.2" rx="2.0" ry="0.9" fill="#d9873a" transform="rotate(8 65.1 197.2)"/><ellipse cx="68.7" cy="196.1" rx="1.6" ry="0.8" fill="#cc7036" transform="rotate(79 68.7 196.1)"/><ellipse cx="63.9" cy="174.8" rx="1.5" ry="0.9" fill="#d47c38" transform="rotate(6 63.9 174.8)"/><ellipse cx="71.8" cy="176.3" rx="1.7" ry="1.2" fill="#d9873a" transform="rotate(114 71.8 176.3)"/><ellipse cx="79.6" cy="191.4" rx="1.5" ry="0.8" fill="#d9873a" transform="rotate(175 79.6 191.4)"/><ellipse cx="75.3" cy="197.5" rx="1.0" ry="1.1" fill="#e29a3a" transform="rotate(136 75.3 197.5)"/><ellipse cx="69.3" cy="177.8" rx="1.1" ry="0.8" fill="#d47c38" transform="rotate(100 69.3 177.8)"/><ellipse cx="78.3" cy="173.7" rx="1.0" ry="0.9" fill="#e29a3a" transform="rotate(33 78.3 173.7)"/><ellipse cx="64.3" cy="186.3" rx="1.9" ry="0.5" fill="#cc7036" transform="rotate(118 64.3 186.3)"/><ellipse cx="63.7" cy="197.8" rx="0.8" ry="1.3" fill="#d9873a" transform="rotate(54 63.7 197.8)"/><ellipse cx="71.3" cy="193.9" rx="0.8" ry="0.8" fill="#cc7036" transform="rotate(67 71.3 193.9)"/><ellipse cx="82.9" cy="176.5" rx="1.2" ry="0.6" fill="#e29a3a" transform="rotate(87 82.9 176.5)"/><ellipse cx="57.9" cy="180.0" rx="1.3" ry="0.5" fill="#d9873a" transform="rotate(109 57.9 180.0)"/><ellipse cx="72.8" cy="178.1" rx="1.1" ry="1.2" fill="#d47c38" transform="rotate(120 72.8 178.1)"/><ellipse cx="77.4" cy="193.2" rx="1.6" ry="1.3" fill="#e29a3a" transform="rotate(126 77.4 193.2)"/><ellipse cx="59.5" cy="178.1" rx="1.7" ry="0.9" fill="#cc7036" transform="rotate(143 59.5 178.1)"/><ellipse cx="63.6" cy="175.6" rx="1.8" ry="1.0" fill="#cc7036" transform="rotate(171 63.6 175.6)"/><ellipse cx="60.3" cy="193.9" rx="1.9" ry="0.7" fill="#d47c38" transform="rotate(139 60.3 193.9)"/><ellipse cx="59.2" cy="182.4" rx="1.0" ry="1.0" fill="#d9873a" transform="rotate(154 59.2 182.4)"/><ellipse cx="62.7" cy="192.1" rx="0.8" ry="1.3" fill="#d9873a" transform="rotate(125 62.7 192.1)"/><ellipse cx="76.1" cy="187.7" rx="1.9" ry="0.9" fill="#e29a3a" transform="rotate(68 76.1 187.7)"/><ellipse cx="71.1" cy="195.1" rx="1.1" ry="1.3" fill="#e29a3a" transform="rotate(134 71.1 195.1)"/><ellipse cx="68.0" cy="190.4" rx="1.5" ry="1.3" fill="#d47c38" transform="rotate(179 68.0 190.4)"/><ellipse cx="71.2" cy="181.9" rx="1.0" ry="0.7" fill="#cc7036" transform="rotate(82 71.2 181.9)"/><ellipse cx="69.5" cy="176.6" rx="1.3" ry="0.9" fill="#d9873a" transform="rotate(130 69.5 176.6)"/><ellipse cx="61.4" cy="175.0" rx="1.6" ry="1.3" fill="#d9873a" transform="rotate(96 61.4 175.0)"/><ellipse cx="61.4" cy="173.8" rx="1.5" ry="1.0" fill="#d47c38" transform="rotate(135 61.4 173.8)"/><ellipse cx="73.2" cy="195.4" rx="1.5" ry="0.6" fill="#cc7036" transform="rotate(46 73.2 195.4)"/><ellipse cx="67.3" cy="192.2" rx="1.9" ry="0.7" fill="#d47c38" transform="rotate(24 67.3 192.2)"/><ellipse cx="75.9" cy="189.9" rx="1.6" ry="0.7" fill="#d9873a" transform="rotate(111 75.9 189.9)"/><ellipse cx="75.8" cy="175.4" rx="1.7" ry="0.6" fill="#e29a3a" transform="rotate(160 75.8 175.4)"/><ellipse cx="70.0" cy="182.3" rx="1.0" ry="1.1" fill="#cc7036" transform="rotate(29 70.0 182.3)"/><ellipse cx="67.3" cy="172.3" rx="1.1" ry="1.4" fill="#d47c38" transform="rotate(18 67.3 172.3)"/><ellipse cx="68.4" cy="184.5" rx="1.7" ry="1.1" fill="#e29a3a" transform="rotate(37 68.4 184.5)"/><ellipse cx="72.7" cy="189.1" rx="0.9" ry="0.6" fill="#cc7036" transform="rotate(172 72.7 189.1)"/><ellipse cx="74.0" cy="186.4" rx="1.9" ry="0.9" fill="#d9873a" transform="rotate(83 74.0 186.4)"/><ellipse cx="63.0" cy="190.6" rx="1.2" ry="0.7" fill="#cc7036" transform="rotate(3 63.0 190.6)"/><ellipse cx="68.7" cy="181.9" rx="1.0" ry="0.9" fill="#cc7036" transform="rotate(94 68.7 181.9)"/><ellipse cx="65.1" cy="188.0" rx="0.9" ry="1.0" fill="#d9873a" transform="rotate(82 65.1 188.0)"/><ellipse cx="81.7" cy="175.6" rx="1.6" ry="1.3" fill="#e29a3a" transform="rotate(145 81.7 175.6)"/><ellipse cx="61.9" cy="177.8" rx="2.0" ry="1.2" fill="#cc7036" transform="rotate(71 61.9 177.8)"/><ellipse cx="82.1" cy="177.1" rx="1.7" ry="1.2" fill="#e29a3a" transform="rotate(34 82.1 177.1)"/><ellipse cx="82.4" cy="175.4" rx="1.6" ry="1.2" fill="#d47c38" transform="rotate(103 82.4 175.4)"/><ellipse cx="72.6" cy="190.6" rx="1.7" ry="0.8" fill="#d9873a" transform="rotate(2 72.6 190.6)"/><ellipse cx="82.6" cy="174.2" rx="1.9" ry="0.5" fill="#cc7036" transform="rotate(170 82.6 174.2)"/><ellipse cx="68.6" cy="191.1" rx="1.2" ry="0.7" fill="#d9873a" transform="rotate(99 68.6 191.1)"/><ellipse cx="59.9" cy="183.2" rx="1.0" ry="0.6" fill="#e29a3a" transform="rotate(147 59.9 183.2)"/><ellipse cx="82.8" cy="185.9" rx="1.7" ry="0.7" fill="#e29a3a" transform="rotate(129 82.8 185.9)"/><ellipse cx="77.3" cy="186.3" rx="1.2" ry="0.6" fill="#cc7036" transform="rotate(70 77.3 186.3)"/><ellipse cx="80.3" cy="177.8" rx="1.4" ry="1.4" fill="#d9873a" transform="rotate(163 80.3 177.8)"/><ellipse cx="59.1" cy="188.5" rx="1.4" ry="1.1" fill="#d9873a" transform="rotate(98 59.1 188.5)"/><ellipse cx="76.4" cy="181.6" rx="1.3" ry="0.7" fill="#e29a3a" transform="rotate(138 76.4 181.6)"/><ellipse cx="67.9" cy="181.8" rx="1.9" ry="0.9" fill="#e29a3a" transform="rotate(153 67.9 181.8)"/><ellipse cx="66.5" cy="194.6" rx="1.3" ry="0.7" fill="#cc7036" transform="rotate(169 66.5 194.6)"/><ellipse cx="69.0" cy="176.0" rx="0.7" ry="0.7" fill="#d9873a" transform="rotate(162 69.0 176.0)"/><ellipse cx="78.3" cy="195.4" rx="1.2" ry="1.3" fill="#e29a3a" transform="rotate(12 78.3 195.4)"/><ellipse cx="59.3" cy="177.7" rx="1.1" ry="1.2" fill="#d47c38" transform="rotate(109 59.3 177.7)"/><ellipse cx="69.3" cy="176.6" rx="1.7" ry="0.5" fill="#d9873a" transform="rotate(119 69.3 176.6)"/><ellipse cx="80.2" cy="196.2" rx="1.0" ry="1.1" fill="#d9873a" transform="rotate(159 80.2 196.2)"/><ellipse cx="66.2" cy="186.8" rx="1.8" ry="0.8" fill="#d47c38" transform="rotate(31 66.2 186.8)"/><ellipse cx="67.0" cy="188.6" rx="1.2" ry="1.0" fill="#e29a3a" transform="rotate(93 67.0 188.6)"/><ellipse cx="72.8" cy="173.1" rx="2.0" ry="1.4" fill="#d47c38" transform="rotate(61 72.8 173.1)"/><ellipse cx="59.9" cy="185.5" rx="1.1" ry="1.0" fill="#cc7036" transform="rotate(70 59.9 185.5)"/><ellipse cx="69.1" cy="196.9" rx="1.4" ry="1.0" fill="#cc7036" transform="rotate(61 69.1 196.9)"/><ellipse cx="73.7" cy="191.4" rx="2.0" ry="1.3" fill="#d9873a" transform="rotate(160 73.7 191.4)"/><ellipse cx="78.3" cy="187.2" rx="1.3" ry="1.1" fill="#d9873a" transform="rotate(56 78.3 187.2)"/><ellipse cx="66.8" cy="183.1" rx="0.8" ry="1.1" fill="#d47c38" transform="rotate(161 66.8 183.1)"/><ellipse cx="81.5" cy="182.9" rx="1.2" ry="0.8" fill="#e29a3a" transform="rotate(34 81.5 182.9)"/><ellipse cx="73.0" cy="180.6" rx="0.9" ry="1.2" fill="#d47c38" transform="rotate(113 73.0 180.6)"/><ellipse cx="63.8" cy="187.8" rx="1.8" ry="0.8" fill="#cc7036" transform="rotate(74 63.8 187.8)"/><ellipse cx="58.0" cy="180.2" rx="1.9" ry="0.9" fill="#cc7036" transform="rotate(148 58.0 180.2)"/><ellipse cx="82.7" cy="192.5" rx="0.8" ry="0.6" fill="#e29a3a" transform="rotate(175 82.7 192.5)"/><ellipse cx="57.1" cy="187.4" rx="0.7" ry="0.8" fill="#d9873a" transform="rotate(177 57.1 187.4)"/><ellipse cx="66.4" cy="196.7" rx="1.6" ry="0.8" fill="#d47c38" transform="rotate(56 66.4 196.7)"/><ellipse cx="62.5" cy="194.5" rx="1.2" ry="0.6" fill="#e29a3a" transform="rotate(145 62.5 194.5)"/><ellipse cx="58.6" cy="175.9" rx="1.6" ry="0.8" fill="#cc7036" transform="rotate(117 58.6 175.9)"/><ellipse cx="66.8" cy="193.1" rx="1.9" ry="1.3" fill="#d47c38" transform="rotate(21 66.8 193.1)"/><path d="M80 170c5 4 8 10 8 15s-3 12-8 16c3-5 4.500-10 4.500-15s-1.500-11-4.500-16z" fill="#cc7038"/></g>
<!-- Earth -->
<circle cx="24.800" cy="236.400" r="15.500" fill="#4a8fe0"/>
<g clip-path="url(#cE)"><g transform="translate(24.800 236.400) scale(.09038) translate(-223 -270)"><g fill="#cdd4b0">
<path d="M188 102C215 96 262 98 300 116C345 138 380 180 392 236C388 244 380 240 376 250C372 262 366 256 360 250C352 246 348 252 346 262C344 276 340 290 334 294C328 286 326 270 320 262C314 258 310 264 306 262C300 258 298 250 292 246C300 262 304 278 298 288C290 280 284 262 274 250C268 252 262 250 258 244C250 240 244 232 236 230C228 228 222 236 214 236C206 236 200 230 194 232C186 234 180 240 172 238C166 232 160 236 152 236C146 228 144 218 150 212C144 206 148 196 156 192C150 186 152 176 160 172C166 166 160 158 166 150C172 144 178 150 182 142C186 132 176 128 180 118C182 112 184 106 188 102z"/>
<path d="M150 252C170 246 196 250 216 248C232 246 250 250 264 252C274 262 280 278 292 290C304 294 318 290 332 294C326 312 312 326 304 342C296 356 298 374 288 390C282 402 272 414 258 416C246 404 240 386 234 368C228 354 226 342 214 338C196 334 172 340 154 330C138 320 128 300 132 280C134 268 140 258 150 252z"/>
<path d="M240 226L300 240L296 264L262 256L244 244z"/>
<path d="M300 352C306 346 312 350 310 360C308 370 302 378 298 374C296 366 296 358 300 352z"/>
<path d="M66 196C78 160 110 124 152 108C136 124 118 140 106 158C96 172 90 190 80 198C74 200 68 200 66 196z"/>
<path d="M58 322C66 330 76 334 84 346C94 362 104 378 120 390C134 402 148 412 158 430C126 422 92 396 72 362C64 348 60 334 58 322z"/>
</g><g fill="#4a8fe0">
<path d="M176 226C186 218 200 222 212 218C222 214 236 216 246 222C238 228 226 226 216 230C204 234 188 232 176 226z"/>
<path d="M212 206C220 202 232 204 236 210C228 214 218 212 212 206z"/>
</g></g></g>
<!-- Mars -->
<circle cx="70.800" cy="236.400" r="15.500" fill="#efc858"/>
<g clip-path="url(#cMa)"><path d="M68 220c4 4 2 9 4 13s7 5 7 10s-4 7-3 10h12v-34z" fill="#f5d877"/><path d="M66 240c2 1 3 3 2.500 5s-2.500 3-4.500 2" fill="none" stroke="#d9b044" stroke-width=".7"/><path d="M60 228c2 2 2 5 1 7" fill="none" stroke="#e2bb4c" stroke-width=".6"/></g>
<!-- Jupiter -->
<circle cx="24.800" cy="289" r="15.500" fill="#b6a194"/>
<g clip-path="url(#cJ)"><rect x="9" y="279" width="32" height="4.300" fill="#d3d3d5"/><path d="M12 281h9M24 280.300h12" stroke="#e6bb96" stroke-width="1"/><rect x="9" y="283.500" width="32" height="2.200" fill="#e7b78f"/><rect x="9" y="286" width="32" height="3.600" fill="#aeb8c7"/><path d="M10 287.500h8M22 288.300h14" stroke="#d3d6dc" stroke-width=".8"/><rect x="9" y="290" width="32" height="1.800" fill="#e4b189"/><rect x="9" y="292.200" width="32" height="4" fill="#d6d3d1"/><path d="M14 294h12M30 295h8" stroke="#c3b3a8" stroke-width=".8"/></g>
<!-- Pluto -->
<circle cx="70.800" cy="289" r="15.500" fill="#e2b391"/>
<g clip-path="url(#cP)"><path d="M55 286c3 0 5 2 8 2s4 3 3 6s-3 6-1 8s3 4 1 5h-12z" fill="#c88f70"/><path d="M66 292c1-4 6-4 7-1c2-3 7-2 7 2s-4 8-8 9s-7-5-6-10z" fill="#f2d0ae"/><circle cx="64" cy="297" r=".8" fill="#a8694f"/><circle cx="67" cy="300" r=".7" fill="#a8694f"/><circle cx="62.500" cy="293" r=".7" fill="#a8694f"/></g>
<!-- Saturn -->
<circle cx="24.800" cy="341.300" r="15.500" fill="#ffd84a"/>
<g clip-path="url(#cS)"><g transform="rotate(-28 24.800 341.300)" fill="none" stroke-linecap="round"><path d="M14 331c5-4 12-5 18-3" stroke="#fff2a8" stroke-width="1.500"/><path d="M10 338c6-6 16-8 27-5" stroke="#fff2a8" stroke-width="2"/><path d="M9 345c7-6 18-8 31-5" stroke="#f6b832" stroke-width="1.400"/><path d="M11 351c7-5 17-6 28-3" stroke="#fff2a8" stroke-width="2"/><path d="M16 356c5-3 12-4 19-2" stroke="#f6b832" stroke-width="1.200"/></g></g>
<!-- Uranus -->
<circle cx="70.800" cy="341.300" r="15.500" fill="#9fe9d6"/>
<!-- Neptune -->
<circle cx="24.800" cy="393.600" r="15.500" fill="#1d50dc"/>
<g clip-path="url(#cN)"><path d="M10 392h30M12 398h28M14 386h22" stroke="#3d6ff0" stroke-width=".8" opacity=".7"/><ellipse cx="15" cy="398" rx="2" ry="1" fill="#3a2fb0"/></g>
<!-- Galaxy -->
<g fill="none" stroke-linecap="round"><path d="M65 390.500c0-2 3-2 3 .5c0 3.500-6 3.500-6-.5c0-5 9.500-5.500 9.500.5c0 6-10 8-14 2.500" stroke="#2f6fe0" stroke-width="2"/><path d="M55.500 389c1-5.500 8-8.500 14-6.500s8 8 5 12.500" stroke="#3f82e6" stroke-width="1.800"/><path d="M58 397c3 3 9 3.500 13 1" stroke="#6aa5ee" stroke-width="1.200"/><path d="M81 399.500c0-1 1.600-1 1.600.3c0 2-3.400 2-3.400-.3c0-3 5.500-3 5.500.3c0 3.500-6 4.500-8 1.500" stroke="#2f6fe0" stroke-width="1.400"/><path d="M76 397.500c1-3.500 5.500-4.500 8.500-3s3.500 5 2 7" stroke="#8f6fd8" stroke-width="1.100"/></g>
<!-- night image -->
<rect x="8" y="438.700" width="34" height="12.300" fill="#0c1230"/>
<g fill="#fff"><circle cx="12" cy="442" r=".5"/><circle cx="17" cy="446" r=".4"/><circle cx="21" cy="441" r=".5"/><circle cx="26" cy="444" r=".4"/><circle cx="31" cy="441.500" r=".5"/><circle cx="36" cy="445" r=".4"/><circle cx="39" cy="441" r=".4"/><circle cx="14" cy="449" r=".4"/><circle cx="23" cy="448" r=".4"/><path d="M28 449l5-3.500" stroke="#fff" stroke-width=".7"/></g>
<!-- rocket -->
<path d="M71 429.500l3 5h-6z" fill="#2f6fd0"/><rect x="68" y="434.500" width="6" height="3" fill="#2f6fd0"/><rect x="68.500" y="437.500" width="5" height="11" fill="#f2f5fa"/><path d="M68.500 440l-3.500 6v4.500h3.500zM73.500 440l3.500 6v4.500h-3.500z" fill="#7fb6ee"/><circle cx="71" cy="441.500" r="1.200" fill="#2f6fd0"/>
</svg>
<span class="t" style="left:24.80px;top:204.44px;font-size:9px;line-height:12px;color:#222;transform:translateX(-50%) scaleX(0.8799);">Mercury</span>
<span class="t" style="left:70.80px;top:204.44px;font-size:9px;line-height:12px;color:#222;transform:translateX(-50%) scaleX(0.8392);">Venus</span>
<span class="t" style="left:24.80px;top:255.94px;font-size:9px;line-height:12px;color:#222;transform:translateX(-50%) scaleX(0.8600);">Earth</span>
<span class="t" style="left:70.80px;top:255.94px;font-size:9px;line-height:12px;color:#222;transform:translateX(-50%) scaleX(0.8500);">Mars</span>
<span class="t" style="left:24.80px;top:308.94px;font-size:9px;line-height:12px;color:#222;transform:translateX(-50%) scaleX(0.8958);">Jupiter</span>
<span class="t" style="left:70.50px;top:308.94px;font-size:9px;line-height:12px;color:#222;transform:translateX(-50%) scaleX(0.8628);">Pluto</span>
<span class="t" style="left:25.00px;top:360.74px;font-size:9px;line-height:12px;color:#222;transform:translateX(-50%) scaleX(0.8372);">Saturn</span>
<span class="t" style="left:70.50px;top:360.74px;font-size:9px;line-height:12px;color:#222;transform:translateX(-50%) scaleX(0.8306);">Uranus</span>
<span class="t" style="left:24.50px;top:413.24px;font-size:9px;line-height:12px;color:#222;transform:translateX(-50%) scaleX(0.8552);">Neptune</span>
<span class="t" style="left:70.40px;top:413.24px;font-size:9px;line-height:12px;color:#222;transform:translateX(-50%) scaleX(0.8140);">Galaxy</span>
<div class="b" style="left:3.5px;top:450.7px;width:42.5px;height:15.5px;background:#fff;border:1px solid #d0d0d0;box-sizing:border-box;border-top:none"></div>
<span class="t" style="left:24.10px;top:452.74px;font-size:9px;line-height:12px;color:#222;transform:translateX(-50%) scaleX(0.8634);">Libraries</span>
<span class="t" style="left:76.50px;top:452.24px;font-size:9px;line-height:12px;color:#222;transform:translateX(-50%) scaleX(0.8252);">File Recovery</span>
<div class="b" style="left:121.5px;top:114px;width:337px;height:10px;background:#fff;border:1px solid #e0e0e0;box-sizing:border-box;border-left:none;border-right:none"></div>
<div class="b" style="left:121.5px;top:124px;width:10px;height:309.5px;background:#fff;border:1px solid #e0e0e0;box-sizing:border-box;border-top:none;border-bottom:none"></div>
<div class="b" style="left:121.5px;top:114px;width:10px;height:10px;background:#e6e6e6;"></div>
<svg class="b" style="left:0px;top:0px;" width="470" height="440" viewBox="0 0 470 440"><g font-family="Liberation Sans, sans-serif"><path d="M135.3 120.500v3" stroke="#d0d0d0" stroke-width=".7"/><path d="M146.6 114.500v9" stroke="#d4d4d4" stroke-width=".7"/><path d="M157.9 120.500v3" stroke="#d0d0d0" stroke-width=".7"/><path d="M169.2 114.500v9" stroke="#d4d4d4" stroke-width=".7"/><path d="M180.5 120.500v3" stroke="#d0d0d0" stroke-width=".7"/><path d="M191.8 114.500v9" stroke="#d4d4d4" stroke-width=".7"/><path d="M203.1 120.500v3" stroke="#d0d0d0" stroke-width=".7"/><path d="M214.4 114.500v9" stroke="#d4d4d4" stroke-width=".7"/><path d="M225.7 120.500v3" stroke="#d0d0d0" stroke-width=".7"/><path d="M237.0 114.500v9" stroke="#d4d4d4" stroke-width=".7"/><path d="M248.3 120.500v3" stroke="#d0d0d0" stroke-width=".7"/><path d="M259.6 114.500v9" stroke="#d4d4d4" stroke-width=".7"/><path d="M270.9 120.500v3" stroke="#d0d0d0" stroke-width=".7"/><path d="M282.2 114.500v9" stroke="#d4d4d4" stroke-width=".7"/><path d="M293.5 120.500v3" stroke="#d0d0d0" stroke-width=".7"/><path d="M304.8 114.500v9" stroke="#d4d4d4" stroke-width=".7"/><path d="M316.1 120.500v3" stroke="#d0d0d0" stroke-width=".7"/><path d="M327.4 114.500v9" stroke="#d4d4d4" stroke-width=".7"/><path d="M338.7 120.500v3" stroke="#d0d0d0" stroke-width=".7"/><path d="M350.0 114.500v9" stroke="#d4d4d4" stroke-width=".7"/><path d="M361.3 120.500v3" stroke="#d0d0d0" stroke-width=".7"/><path d="M372.6 114.500v9" stroke="#d4d4d4" stroke-width=".7"/><path d="M383.9 120.500v3" stroke="#d0d0d0" stroke-width=".7"/><path d="M395.2 114.500v9" stroke="#d4d4d4" stroke-width=".7"/><path d="M406.5 120.500v3" stroke="#d0d0d0" stroke-width=".7"/><path d="M417.8 114.500v9" stroke="#d4d4d4" stroke-width=".7"/><path d="M429.1 120.500v3" stroke="#d0d0d0" stroke-width=".7"/><path d="M440.4 114.500v9" stroke="#d4d4d4" stroke-width=".7"/><path d="M451.7 120.500v3" stroke="#d0d0d0" stroke-width=".7"/><path d="M122 135.8h9" stroke="#d4d4d4" stroke-width=".7"/><path d="M127.500 147.1h3.500" stroke="#d0d0d0" stroke-width=".7"/><path d="M122 158.4h9" stroke="#d4d4d4" stroke-width=".7"/><path d="M127.500 169.7h3.500" stroke="#d0d0d0" stroke-width=".7"/><path d="M122 181.0h9" stroke="#d4d4d4" stroke-width=".7"/><path d="M127.500 192.3h3.500" stroke="#d0d0d0" stroke-width=".7"/><path d="M122 203.6h9" stroke="#d4d4d4" stroke-width=".7"/><path d="M127.500 214.9h3.500" stroke="#d0d0d0" stroke-width=".7"/><path d="M122 226.2h9" stroke="#d4d4d4" stroke-width=".7"/><path d="M127.500 237.5h3.500" stroke="#d0d0d0" stroke-width=".7"/><path d="M122 248.8h9" stroke="#d4d4d4" stroke-width=".7"/><path d="M127.500 260.1h3.500" stroke="#d0d0d0" stroke-width=".7"/><path d="M122 271.4h9" stroke="#d4d4d4" stroke-width=".7"/><path d="M127.500 282.7h3.500" stroke="#d0d0d0" stroke-width=".7"/><path d="M122 294.0h9" stroke="#d4d4d4" stroke-width=".7"/><path d="M127.500 305.3h3.500" stroke="#d0d0d0" stroke-width=".7"/><path d="M122 316.6h9" stroke="#d4d4d4" stroke-width=".7"/><path d="M127.500 327.9h3.500" stroke="#d0d0d0" stroke-width=".7"/><path d="M122 339.2h9" stroke="#d4d4d4" stroke-width=".7"/><path d="M127.500 350.5h3.500" stroke="#d0d0d0" stroke-width=".7"/><path d="M122 361.8h9" stroke="#d4d4d4" stroke-width=".7"/><path d="M127.500 373.1h3.500" stroke="#d0d0d0" stroke-width=".7"/><path d="M122 384.4h9" stroke="#d4d4d4" stroke-width=".7"/><path d="M127.500 395.7h3.500" stroke="#d0d0d0" stroke-width=".7"/><path d="M122 407.0h9" stroke="#d4d4d4" stroke-width=".7"/><path d="M127.500 418.3h3.500" stroke="#d0d0d0" stroke-width=".7"/><path d="M122 429.6h9" stroke="#d4d4d4" stroke-width=".7"/><text x="147.6" y="120.200" font-size="6.400" fill="#5a5a5a" textLength="5.8" lengthAdjust="spacingAndGlyphs">20</text><text x="170.2" y="120.200" font-size="6.400" fill="#5a5a5a" textLength="5.8" lengthAdjust="spacingAndGlyphs">40</text><text x="192.8" y="120.200" font-size="6.400" fill="#5a5a5a" textLength="5.8" lengthAdjust="spacingAndGlyphs">60</text><text x="215.4" y="120.200" font-size="6.400" fill="#5a5a5a" textLength="5.8" lengthAdjust="spacingAndGlyphs">80</text><text x="238.0" y="120.200" font-size="6.400" fill="#5a5a5a" textLength="8.7" lengthAdjust="spacingAndGlyphs">100</text><text x="260.6" y="120.200" font-size="6.400" fill="#5a5a5a" textLength="8.7" lengthAdjust="spacingAndGlyphs">120</text><text x="283.2" y="120.200" font-size="6.400" fill="#5a5a5a" textLength="8.7" lengthAdjust="spacingAndGlyphs">140</text><text x="305.8" y="120.200" font-size="6.400" fill="#5a5a5a" textLength="8.7" lengthAdjust="spacingAndGlyphs">160</text><text x="328.4" y="120.200" font-size="6.400" fill="#5a5a5a" textLength="8.7" lengthAdjust="spacingAndGlyphs">180</text><text x="351.0" y="120.200" font-size="6.400" fill="#5a5a5a" textLength="8.7" lengthAdjust="spacingAndGlyphs">200</text><text x="373.6" y="120.200" font-size="6.400" fill="#5a5a5a" textLength="8.7" lengthAdjust="spacingAndGlyphs">220</text><text x="396.2" y="120.200" font-size="6.400" fill="#5a5a5a" textLength="8.7" lengthAdjust="spacingAndGlyphs">240</text><text x="418.8" y="120.200" font-size="6.400" fill="#5a5a5a" textLength="8.7" lengthAdjust="spacingAndGlyphs">260</text><text x="441.4" y="120.200" font-size="6.400" fill="#5a5a5a" textLength="8.7" lengthAdjust="spacingAndGlyphs">280</text><text transform="translate(127.300 143.8) rotate(-90)" font-size="6.400" fill="#5a5a5a" textLength="5.8" lengthAdjust="spacingAndGlyphs">20</text><text transform="translate(127.300 163.5) rotate(-90)" font-size="6.400" fill="#5a5a5a" textLength="2.9" lengthAdjust="spacingAndGlyphs">0</text><text transform="translate(127.300 189.0) rotate(-90)" font-size="6.400" fill="#5a5a5a" textLength="5.8" lengthAdjust="spacingAndGlyphs">20</text><text transform="translate(127.300 211.6) rotate(-90)" font-size="6.400" fill="#5a5a5a" textLength="5.8" lengthAdjust="spacingAndGlyphs">40</text><text transform="translate(127.300 234.2) rotate(-90)" font-size="6.400" fill="#5a5a5a" textLength="5.8" lengthAdjust="spacingAndGlyphs">60</text><text transform="translate(127.300 256.8) rotate(-90)" font-size="6.400" fill="#5a5a5a" textLength="5.8" lengthAdjust="spacingAndGlyphs">80</text><text transform="translate(127.300 282.3) rotate(-90)" font-size="6.400" fill="#5a5a5a" textLength="8.7" lengthAdjust="spacingAndGlyphs">100</text><text transform="translate(127.300 304.9) rotate(-90)" font-size="6.400" fill="#5a5a5a" textLength="8.7" lengthAdjust="spacingAndGlyphs">120</text><text transform="translate(127.300 327.5) rotate(-90)" font-size="6.400" fill="#5a5a5a" textLength="8.7" lengthAdjust="spacingAndGlyphs">140</text><text transform="translate(127.300 350.1) rotate(-90)" font-size="6.400" fill="#5a5a5a" textLength="8.7" lengthAdjust="spacingAndGlyphs">160</text><text transform="translate(127.300 372.7) rotate(-90)" font-size="6.400" fill="#5a5a5a" textLength="8.7" lengthAdjust="spacingAndGlyphs">180</text><text transform="translate(127.300 395.3) rotate(-90)" font-size="6.400" fill="#5a5a5a" textLength="8.7" lengthAdjust="spacingAndGlyphs">200</text><text transform="translate(127.300 417.9) rotate(-90)" font-size="6.400" fill="#5a5a5a" textLength="8.7" lengthAdjust="spacingAndGlyphs">220</text></g></svg>
<div class="b" style="left:131.7px;top:158px;width:326.5px;height:238.5px;background:#3c516c;"></div>
<div class="b" style="left:131.7px;top:157.3px;width:326.5px;height:0.8px;background:#f4f4f4;"></div>
<div class="b" style="left:458.3px;top:114px;width:10.2px;height:330px;background:#ececec;"></div>
<div class="b" style="left:458.3px;top:114px;width:10.2px;height:10px;background:#fff;border:1px solid #cfcfcf;box-sizing:border-box;"></div>
<svg class="b" style="left:460.4px;top:116.8px;" width="6" height="5" viewBox="0 0 6 5"><path d="M.5 3.800l2.500-3l2.500 3z" fill="#444"/></svg>
<div class="b" style="left:458.3px;top:197.5px;width:10.2px;height:148.5px;background:#fff;border:1px solid #c9c9c9;box-sizing:border-box;"></div>
<div class="b" style="left:458.3px;top:423.8px;width:10.2px;height:9.7px;background:#fff;border:1px solid #cfcfcf;box-sizing:border-box;"></div>
<svg class="b" style="left:460.4px;top:426.8px;" width="6" height="5" viewBox="0 0 6 5"><path d="M.5.800h5l-2.500 3z" fill="#444"/></svg>
<div class="b" style="left:121.5px;top:433.7px;width:336.8px;height:10.2px;background:#ececec;"></div>
<div class="b" style="left:121.5px;top:433.7px;width:9.8px;height:10.2px;background:#fff;border:1px solid #cfcfcf;box-sizing:border-box;"></div>
<svg class="b" style="left:124px;top:435.6px;" width="5" height="6" viewBox="0 0 5 6"><path d="M3.800.500l-3 2.500l3 2.500z" fill="#444"/></svg>
<div class="b" style="left:448.5px;top:433.7px;width:9.8px;height:10.2px;background:#fff;border:1px solid #cfcfcf;box-sizing:border-box;"></div>
<svg class="b" style="left:451.3px;top:435.6px;" width="5" height="6" viewBox="0 0 5 6"><path d="M1 .5l3 2.500l-3 2.500z" fill="#444"/></svg>
<div class="b" style="left:242.7px;top:433.7px;width:93px;height:10.2px;background:#fff;border:1px solid #c9c9c9;box-sizing:border-box;"></div>
<svg class="b" style="left:240px;top:225px;" width="160" height="150" viewBox="0 0 160 150"><g transform="scale(.30826)">
<defs>
<clipPath id="gc"><ellipse cx="246.500" cy="241" rx="228.500" ry="219"/></clipPath>
<clipPath id="fBack"><path d="M262 26.600A224.200 214.800 0 0 1 469.800 223L262 226.300z"/></clipPath>
<clipPath id="fLeft"><path d="M265 24C196 72 180 170 192.200 296.200L265 229z"/></clipPath>
<clipPath id="fBot"><path d="M262 223L469.800 220C425 282 290 308 192.200 296.200z"/></clipPath>
<radialGradient id="glow"><stop offset="0" stop-color="#fff"/><stop offset=".3" stop-color="#fffbd0"/><stop offset="1" stop-color="#f6d122" stop-opacity="0"/></radialGradient>
</defs>
<ellipse cx="246.500" cy="241" rx="228.500" ry="219" fill="#2d9de2"/>
<g clip-path="url(#gc)" fill="#c6f3fc">
<path d="M18 208L33 185C40 165 58 142 74 128C82 112 90 98 98 90C112 76 150 56 212 32L212 0L0 0L0 208z"/>

<path d="M138 124l10-8l4 6l8-4l4 8l-8 6l10 4l-2 10l-12 4l-10-6l4-8l-8-4z"/>
<path d="M179 113C181 98 190 82 205 71L208 92C199 99 193 108 187 115z"/>
<path d="M142 190C139 180 149 173 158 170C160 160 176 156 196 152L198 202C188 204 178 198 170 200C160 204 147 200 142 190z"/>
<path d="M150 215C165 210 185 212 200 214L330 290C345 300 342 320 334 336C322 356 308 370 304 390C300 405 292 412 284 412C272 400 266 380 262 362C258 345 250 332 236 324C220 314 200 318 180 318C160 318 142 305 132 285C124 268 126 246 134 232C138 224 144 218 150 215z"/>
<path d="M345 340c6-6 14-8 18-2c0 12-6 24-14 34c-6-2-10-10-4-32z"/>
<path d="M26 316C40 324 58 332 72 346C86 358 96 372 102 388C110 405 140 428 182 447L182 475L10 475L0 316z"/>
<path d="M462 232c6 8 8 22 6 40c-6-10-10-26-6-40z"/>
</g>
<!-- cutaway faces -->
<path d="M262 26.600C196 72 180 170 192.200 296.200C290 308 425 282 469.800 223A224.200 214.800 0 0 0 262 26.600z" fill="#d8493a"/>
<g clip-path="url(#fLeft)"><rect x="180" y="15" width="300" height="300" fill="#c63f2f"/><ellipse cx="262" cy="226.300" rx="37" ry="108" fill="#d9601c"/><ellipse cx="262" cy="226.300" rx="17" ry="57" fill="#efc21f"/></g>
<g clip-path="url(#fBot)"><rect x="180" y="15" width="300" height="300" fill="#fb6c43"/><ellipse cx="262" cy="226.300" rx="108" ry="40" fill="#fd8a36"/><ellipse cx="262" cy="226.300" rx="57" ry="21.500" fill="#f8cf2c"/></g>
<g clip-path="url(#fBack)"><rect x="180" y="15" width="300" height="300" fill="#e8513d"/><circle cx="262" cy="226.300" r="108" fill="#e67e2b"/><circle cx="262" cy="226.300" r="57" fill="#f6d122"/><circle cx="276.700" cy="216.400" r="30" fill="url(#glow)"/></g>
<path d="M262 26.600C196 72 180 170 192.200 296.200C290 308 425 282 469.800 223A224.200 214.800 0 0 0 262 26.600z" fill="none" stroke="#8e8e8e" stroke-width="9" stroke-linejoin="round"/>
</g></svg>
<svg class="b" style="left:0px;top:0px;" width="470" height="440" viewBox="0 0 470 440">
<g stroke="#e9e9e9" stroke-width=".9"><path d="M365.700 252.700H438.500"/><path d="M353.600 264.400H426.500"/><path d="M340.800 278H413"/><path d="M325.700 292.300H398"/></g>
<g fill="#fff"><circle cx="365.700" cy="252.700" r="1.400"/><circle cx="353.600" cy="264.400" r="1.400"/><circle cx="340.800" cy="278" r="1.400"/><circle cx="325.700" cy="292.300" r="1.400"/></g>
<g font-family="Liberation Sans, sans-serif" font-weight="bold" font-size="4.200" fill="#fff">
<text x="440.600" y="254.300" textLength="11.500" lengthAdjust="spacingAndGlyphs">Crust</text>
<text x="428.600" y="266" textLength="14.300" lengthAdjust="spacingAndGlyphs">Mantle</text>
<text x="415.100" y="279.600" textLength="24" lengthAdjust="spacingAndGlyphs">Outer Core</text>
<text x="400" y="293.900" textLength="23.400" lengthAdjust="spacingAndGlyphs">Inner Core</text>
</g>
</svg>
<span class="t" style="left:285.00px;top:204.84px;font-size:11.5px;line-height:14px;color:#fff;font-weight:bold;transform-origin:0 50%;transform:scaleX(1.0786);">Structure of the Earth</span>
<svg class="b" style="left:126px;top:244px;" width="70" height="72" viewBox="0 0 70 72"><g transform="scale(.148)">
<defs><clipPath id="sc"><circle cx="223" cy="270" r="171.500"/></clipPath></defs>
<circle cx="223" cy="270" r="171.500" fill="#5b87c8"/>
<g clip-path="url(#sc)"><g fill="#fcdc90">
<path d="M188 102C215 96 262 98 300 116C345 138 380 180 392 236C388 244 380 240 376 250C372 262 366 256 360 250C352 246 348 252 346 262C344 276 340 290 334 294C328 286 326 270 320 262C314 258 310 264 306 262C300 258 298 250 292 246C300 262 304 278 298 288C290 280 284 262 274 250C268 252 262 250 258 244C250 240 244 232 236 230C228 228 222 236 214 236C206 236 200 230 194 232C186 234 180 240 172 238C166 232 160 236 152 236C146 228 144 218 150 212C144 206 148 196 156 192C150 186 152 176 160 172C166 166 160 158 166 150C172 144 178 150 182 142C186 132 176 128 180 118C182 112 184 106 188 102z"/>
<path d="M150 252C170 246 196 250 216 248C232 246 250 250 264 252C274 262 280 278 292 290C304 294 318 290 332 294C326 312 312 326 304 342C296 356 298 374 288 390C282 402 272 414 258 416C246 404 240 386 234 368C228 354 226 342 214 338C196 334 172 340 154 330C138 320 128 300 132 280C134 268 140 258 150 252z"/>
<path d="M240 226L300 240L296 264L262 256L244 244z"/>
<path d="M300 352C306 346 312 350 310 360C308 370 302 378 298 374C296 366 296 358 300 352z"/>
<path d="M66 196C78 160 110 124 152 108C136 124 118 140 106 158C96 172 90 190 80 198C74 200 68 200 66 196z"/>
<path d="M58 322C66 330 76 334 84 346C94 362 104 378 120 390C134 402 148 412 158 430C126 422 92 396 72 362C64 348 60 334 58 322z"/>
</g><g fill="#5b87c8">
<path d="M176 226C186 218 200 222 212 218C222 214 236 216 246 222C238 228 226 226 216 230C204 234 188 232 176 226z"/>
<path d="M212 206C220 202 232 204 236 210C228 214 218 212 212 206z"/>
</g></g>
</g></svg>
<svg class="b" style="left:0px;top:0px;" width="470" height="440" viewBox="0 0 470 440"><rect x="133" y="258.600" width="52" height="51.400" fill="none" stroke="#2fa13a" stroke-width=".9" stroke-dasharray="2.200 1.800"/><path d="M159 258.600v-7" stroke="#2fa13a" stroke-width=".8" stroke-dasharray="1.500 1.200"/><rect x="131.4" y="257.0" width="3.200" height="3.200" rx=".6" fill="#a9e28c" stroke="#6cc04f" stroke-width=".5"/><rect x="131.4" y="282.7" width="3.200" height="3.200" rx=".6" fill="#a9e28c" stroke="#6cc04f" stroke-width=".5"/><rect x="131.4" y="308.4" width="3.200" height="3.200" rx=".6" fill="#a9e28c" stroke="#6cc04f" stroke-width=".5"/><rect x="157.4" y="257.0" width="3.200" height="3.200" rx=".6" fill="#a9e28c" stroke="#6cc04f" stroke-width=".5"/><rect x="157.4" y="308.4" width="3.200" height="3.200" rx=".6" fill="#a9e28c" stroke="#6cc04f" stroke-width=".5"/><rect x="183.4" y="257.0" width="3.200" height="3.200" rx=".6" fill="#a9e28c" stroke="#6cc04f" stroke-width=".5"/><rect x="183.4" y="282.7" width="3.200" height="3.200" rx=".6" fill="#a9e28c" stroke="#6cc04f" stroke-width=".5"/><rect x="183.4" y="308.4" width="3.200" height="3.200" rx=".6" fill="#a9e28c" stroke="#6cc04f" stroke-width=".5"/><circle cx="159" cy="249.800" r="2.300" fill="#a9e28c" stroke="#6cc04f" stroke-width=".5"/><path d="M192 287.800H241" stroke="#e0191f" stroke-width="1.500"/><path d="M240 285l7.200 2.800l-7.200 2.800z" fill="#e0191f"/><path d="M49.300 253L125 277" stroke="#e8191f" stroke-width="1.400"/><path d="M122 273.200l9.500 5.800l-11 .8z" fill="#e8191f"/></svg>
<div class="b" style="left:470.3px;top:114px;width:0.7px;height:352px;background:#f1f1f1;"></div>
<div class="b" style="left:491px;top:114px;width:0.8px;height:352px;background:#e0e0e0;"></div>
<div class="b" style="left:471.8px;top:114px;width:17.8px;height:17.8px;background:#b7c8ea;"></div>
<svg class="b" style="left:0px;top:0px;" width="495" height="320" viewBox="0 0 495 320">
<!-- fill bucket -->
<path d="M476 121.500l4-4l4.500 4.500l-4.200 4.200c-.6.600-1.400.600-2 0l-2.300-2.300c-.6-.6-.6-1.600 0-2.400z" fill="#f1f1f1" stroke="#666" stroke-width=".7"/><path d="M478.500 120c-1-2.500 1.500-4 2.500-2" fill="none" stroke="#666" stroke-width=".7"/><path d="M483 119c3 0 5.500 2 5.500 5.500c-1.500-1.500-3.500-2.500-6-3z" fill="#e8457e"/><rect x="475.300" y="127.400" width="12.300" height="2.500" fill="#111"/>
<!-- line -->
<path d="M475.700 139.500h6.500v6" fill="none" stroke="#2f65b5" stroke-width="1"/><path d="M479.500 146l.8-2.600l5-6.200l1.800 1.400l-5 6.200z" fill="#f3a93a"/><path d="M479.500 146l.8-2.600l1.600 1.300z" fill="#333"/><rect x="475.300" y="146.900" width="11.500" height="2.300" fill="#111"/>
<!-- shadow -->
<rect x="474.700" y="156.700" width="11.800" height="12.100" fill="#6dcbc3"/>
<!-- picture -->
<rect x="475.300" y="177.200" width="10.800" height="10.300" fill="#f4f8fd" stroke="#a9c3e6" stroke-width=".6"/><path d="M475.500 187.300v-3.500l2.500-2.300l2.300 2.300l2-1.800l3.600 3v2.300z" fill="#2f65b5"/><circle cx="484" cy="179.500" r="1" fill="#f2b632"/>
<!-- layer -->
<rect x="475.300" y="196" width="8.200" height="8.700" fill="#2f65b5"/><rect x="478" y="198.500" width="8.500" height="9.900" fill="#f6c975"/>
<!-- document -->
<path d="M476.300 216.300h6l3.500 3.500v8.200h-9.500z" fill="#fff" stroke="#4a7cc4" stroke-width=".8"/><path d="M478.200 220h5.400M478.200 222h5.400M478.200 224h5.400M478.200 226h5.400" stroke="#4a7cc4" stroke-width=".8"/><path d="M477.600 220v6.500" stroke="#e2596a" stroke-width=".5"/>
<!-- globe link -->
<circle cx="480.300" cy="241" r="5.300" fill="#2f65b5" stroke="#1d3f7a" stroke-width=".5"/><path d="M477 238.500c1.500-1.500 4-2 5.500-1s1 3-.5 3.500s-1.500 2.500-3 2.500s-2.500-3-2-5z" fill="#e6eefa"/><path d="M481.500 244.700h1.500a1.400 1.400 0 0 1 0 2.800h-1.500a1.400 1.400 0 0 1 0-2.800zM484.500 244.700h1.500a1.400 1.400 0 0 1 0 2.800h-1.500" fill="none" stroke="#e9a020" stroke-width=".9"/>
<!-- note -->
<path d="M476.300 257h5.700l3.500 3.500v7.800h-9.200z" fill="#fff" stroke="#4a7cc4" stroke-width=".8"/><path d="M478.500 266.500l.8-2.500l4-4.500l1.600 1.400l-4 4.600z" fill="#fff" stroke="#4a7cc4" stroke-width=".7"/>
<!-- comment -->
<path d="M476 277.800h10v7h-5.500l-2.200 2.400v-2.400h-2.300z" fill="#fff" stroke="#2f65b5" stroke-width="1.200" stroke-linejoin="round"/><circle cx="478.500" cy="281.300" r=".8" fill="#2f65b5"/><circle cx="481" cy="281.300" r=".8" fill="#2f65b5"/><circle cx="483.500" cy="281.300" r=".8" fill="#2f65b5"/>
<!-- help -->
<circle cx="481" cy="302.700" r="5.400" fill="#1f5fb0"/>
</svg>
<span class="t" style="left:481.00px;top:296.86px;font-size:8.5px;line-height:12px;color:#fff;font-weight:bold;transform:translateX(-50%) scaleX(1.0000);">?</span>
<div class="b" style="left:494.3px;top:118px;width:191.5px;height:100.7px;background:#fff;border:1px solid #e9e9e9;box-sizing:border-box;"></div>
<span class="t" style="left:509.50px;top:122.94px;font-size:9px;line-height:12px;color:#222;transform-origin:0 50%;transform:scaleX(0.9109);">No fill</span>
<span class="t" style="left:509.50px;top:138.64px;font-size:9px;line-height:12px;color:#222;transform-origin:0 50%;transform:scaleX(0.8867);">Solid fill</span>
<span class="t" style="left:509.50px;top:154.34px;font-size:9px;line-height:12px;color:#222;transform-origin:0 50%;transform:scaleX(0.8678);">Gradient fill</span>
<span class="t" style="left:509.50px;top:170.04px;font-size:9px;line-height:12px;color:#222;transform-origin:0 50%;transform:scaleX(0.8973);">Single color gradient fill</span>
<span class="t" style="left:509.50px;top:185.74px;font-size:9px;line-height:12px;color:#222;transform-origin:0 50%;transform:scaleX(0.9121);">Pattern fill</span>
<span class="t" style="left:509.50px;top:201.44px;font-size:9px;line-height:12px;color:#222;transform-origin:0 50%;transform:scaleX(0.8865);">Picture or texture fill</span>
<svg class="b" style="left:0px;top:0px;" width="520" height="220" viewBox="0 0 520 220"><circle cx="502.800" cy="129.0" r="3.200" fill="#fff" stroke="#b5b5b5" stroke-width=".7"/><circle cx="502.800" cy="144.7" r="3.200" fill="#fff" stroke="#b5b5b5" stroke-width=".7"/><circle cx="502.800" cy="144.7" r="1.500" fill="#9a9a9a"/><circle cx="502.800" cy="160.4" r="3.200" fill="#fff" stroke="#b5b5b5" stroke-width=".7"/><circle cx="502.800" cy="176.1" r="3.200" fill="#fff" stroke="#b5b5b5" stroke-width=".7"/><circle cx="502.800" cy="191.8" r="3.200" fill="#fff" stroke="#b5b5b5" stroke-width=".7"/><circle cx="502.800" cy="207.5" r="3.200" fill="#fff" stroke="#b5b5b5" stroke-width=".7"/></svg>
<span class="t" style="left:499.60px;top:229.94px;font-size:9px;line-height:12px;color:#222;transform-origin:0 50%;transform:scaleX(0.8539);">Color:</span>
<div class="b" style="left:647.5px;top:229.4px;width:39px;height:13.2px;background:#fff;border:1px solid #c9c9c9;box-sizing:border-box;"></div>
<div class="b" style="left:651px;top:232px;width:28.6px;height:8px;background:#2b8bd9;"></div>
<svg class="b" style="left:680px;top:234.5px;" width="5" height="4" viewBox="0 0 5 4"><path d="M.6.600h3l-1.500 1.800z" fill="#444"/></svg>
<span class="t" style="left:499.60px;top:250.14px;font-size:9px;line-height:12px;color:#222;transform-origin:0 50%;transform:scaleX(0.8403);">Shade/Tint:</span>
<span class="t" style="left:499.60px;top:270.94px;font-size:9px;line-height:12px;color:#222;transform-origin:0 50%;transform:scaleX(0.8463);">Transparency:</span>
<svg class="b" style="left:0px;top:0px;" width="650" height="290" viewBox="0 0 650 290">
<path d="M554.500 256.300H598" stroke="#6a6a6a" stroke-width=".8"/><path d="M598 256.300H641" stroke="#dcdcdc" stroke-width=".8"/><circle cx="598" cy="256.300" r="2.400" fill="#7f9df2"/>
<path d="M554.500 277H641" stroke="#dcdcdc" stroke-width=".8"/><circle cx="557" cy="277" r="2.400" fill="#7f9df2"/>
</svg>
<div class="b" style="left:647.5px;top:249.5px;width:39px;height:13.5px;background:#fff;border:1px solid #c9c9c9;box-sizing:border-box;"></div>
<span class="t" style="left:649.80px;top:250.24px;font-size:9px;line-height:12px;color:#222;transform-origin:0 50%;transform:scaleX(0.8512);">0 %</span>
<svg class="b" style="left:678.500px;top:252.0px" width="5" height="9" viewBox="0 0 5 9"><path d="M1 2.800l1.400-1.600l1.400 1.600zM1 6l1.400 1.600l1.400-1.600z" fill="#444"/></svg>
<div class="b" style="left:647.5px;top:270px;width:39px;height:13.5px;background:#fff;border:1px solid #c9c9c9;box-sizing:border-box;"></div>
<span class="t" style="left:649.80px;top:270.74px;font-size:9px;line-height:12px;color:#222;transform-origin:0 50%;transform:scaleX(0.8512);">0 %</span>
<svg class="b" style="left:678.500px;top:272.5px" width="5" height="9" viewBox="0 0 5 9"><path d="M1 2.800l1.400-1.600l1.400 1.600zM1 6l1.400 1.600l1.400-1.600z" fill="#444"/></svg>
<svg class="b" style="left:124px;top:447.4px;" width="9" height="7" viewBox="0 0 9 7"><path d="M1 5.500l3.300-3.700l3.300 3.700" fill="none" stroke="#2f6fc0" stroke-width="1.300"/></svg>
<div class="b" style="left:135.8px;top:447.5px;width:0.7px;height:7.5px;background:#9a9a9a;"></div>
<span class="t" style="left:137.80px;top:445.54px;font-size:9px;line-height:12px;color:#222;transform-origin:0 50%;transform:scaleX(0.8683);">Page-1</span>
<svg class="b" style="left:202.5px;top:450.3px;" width="5" height="4" viewBox="0 0 5 4"><path d="M.6.600h3l-1.500 1.800z" fill="#444"/></svg>
<div class="b" style="left:209.7px;top:447.5px;width:0.7px;height:7.5px;background:#bdbdbd;"></div>
<svg class="b" style="left:214.8px;top:447px;" width="9" height="9" viewBox="0 0 9 9"><path d="M.8 4.500h7.400M4.500.800v7.400" stroke="#1fa33c" stroke-width="1.500"/></svg>
<div class="b" style="left:227.5px;top:447px;width:0.7px;height:7.5px;background:#cfcfcf;"></div>
<span class="t" style="left:237.00px;top:445.54px;font-size:9px;line-height:12px;color:#2f55c8;font-weight:bold;transform-origin:0 50%;transform:scaleX(0.8470);">Page-1</span>
<span class="t" style="left:123.40px;top:455.78px;font-size:8px;line-height:12px;color:#444;transform-origin:0 50%;transform:scaleX(0.9296);-webkit-text-stroke:0;">Fill</span>
<svg class="b" style="left:0px;top:457.6px;" width="460" height="9" viewBox="0 0 460 9"><rect x="136.7" y="0" width="2.700" height="8.500" fill="#b00000"/><rect x="139.7" y="0" width="2.700" height="8.500" fill="#bd070e"/><rect x="142.7" y="0" width="2.700" height="8.500" fill="#cb0e1c"/><rect x="145.7" y="0" width="2.700" height="8.500" fill="#d7162b"/><rect x="148.7" y="0" width="2.700" height="8.500" fill="#db243d"/><rect x="151.7" y="0" width="2.700" height="8.500" fill="#df334e"/><rect x="154.7" y="0" width="2.700" height="8.500" fill="#e34160"/><rect x="157.7" y="0" width="2.700" height="8.500" fill="#e84f72"/><rect x="160.7" y="0" width="2.700" height="8.500" fill="#ec5d83"/><rect x="163.7" y="0" width="2.700" height="8.500" fill="#ef6d8e"/><rect x="166.7" y="0" width="2.700" height="8.500" fill="#f17e91"/><rect x="169.7" y="0" width="2.700" height="8.500" fill="#f39095"/><rect x="172.7" y="0" width="2.700" height="8.500" fill="#f59fa2"/><rect x="175.7" y="0" width="2.700" height="8.500" fill="#f8aeb3"/><rect x="178.7" y="0" width="2.700" height="8.500" fill="#fabcc5"/><rect x="181.7" y="0" width="2.700" height="8.500" fill="#fbc8d1"/><rect x="184.7" y="0" width="2.700" height="8.500" fill="#fcd5dd"/><rect x="187.7" y="0" width="2.700" height="8.500" fill="#fde1e8"/><rect x="190.7" y="0" width="2.700" height="8.500" fill="#0e1a50"/><rect x="193.7" y="0" width="2.700" height="8.500" fill="#132569"/><rect x="196.7" y="0" width="2.700" height="8.500" fill="#183181"/><rect x="199.7" y="0" width="2.700" height="8.500" fill="#1d3c99"/><rect x="202.7" y="0" width="2.700" height="8.500" fill="#214bab"/><rect x="205.7" y="0" width="2.700" height="8.500" fill="#255abc"/><rect x="208.7" y="0" width="2.700" height="8.500" fill="#296acb"/><rect x="211.7" y="0" width="2.700" height="8.500" fill="#2d7cd4"/><rect x="214.7" y="0" width="2.700" height="8.500" fill="#308ddd"/><rect x="217.7" y="0" width="2.700" height="8.500" fill="#399ee3"/><rect x="220.7" y="0" width="2.700" height="8.500" fill="#47aee6"/><rect x="223.7" y="0" width="2.700" height="8.500" fill="#55beea"/><rect x="226.7" y="0" width="2.700" height="8.500" fill="#68c9ed"/><rect x="229.7" y="0" width="2.700" height="8.500" fill="#7dd2f1"/><rect x="232.7" y="0" width="2.700" height="8.500" fill="#92dbf4"/><rect x="235.7" y="0" width="2.700" height="8.500" fill="#a5e1f6"/><rect x="238.7" y="0" width="2.700" height="8.500" fill="#b6e6f8"/><rect x="241.7" y="0" width="2.700" height="8.500" fill="#c8ecfa"/><rect x="244.7" y="0" width="2.700" height="8.500" fill="#0a462d"/><rect x="247.7" y="0" width="2.700" height="8.500" fill="#0f5832"/><rect x="250.7" y="0" width="2.700" height="8.500" fill="#156938"/><rect x="253.7" y="0" width="2.700" height="8.500" fill="#1a7b3d"/><rect x="256.7" y="0" width="2.700" height="8.500" fill="#238b44"/><rect x="259.7" y="0" width="2.700" height="8.500" fill="#2c9a4b"/><rect x="262.7" y="0" width="2.700" height="8.500" fill="#36a855"/><rect x="265.7" y="0" width="2.700" height="8.500" fill="#40b163"/><rect x="268.7" y="0" width="2.700" height="8.500" fill="#4bba71"/><rect x="271.7" y="0" width="2.700" height="8.500" fill="#4cbe80"/><rect x="274.7" y="0" width="2.700" height="8.500" fill="#45be90"/><rect x="277.7" y="0" width="2.700" height="8.500" fill="#3ebea0"/><rect x="280.7" y="0" width="2.700" height="8.500" fill="#4cc08c"/><rect x="283.7" y="0" width="2.700" height="8.500" fill="#65c467"/><rect x="286.7" y="0" width="2.700" height="8.500" fill="#7ec742"/><rect x="289.7" y="0" width="2.700" height="8.500" fill="#98cf48"/><rect x="292.7" y="0" width="2.700" height="8.500" fill="#b3d856"/><rect x="295.7" y="0" width="2.700" height="8.500" fill="#cde164"/><rect x="298.7" y="0" width="2.700" height="8.500" fill="#e23c1e"/><rect x="301.7" y="0" width="2.700" height="8.500" fill="#e84c1e"/><rect x="304.7" y="0" width="2.700" height="8.500" fill="#ee5d1e"/><rect x="307.7" y="0" width="2.700" height="8.500" fill="#f1701e"/><rect x="310.7" y="0" width="2.700" height="8.500" fill="#f4841e"/><rect x="313.7" y="0" width="2.700" height="8.500" fill="#f6981e"/><rect x="316.7" y="0" width="2.700" height="8.500" fill="#f8a61e"/><rect x="319.7" y="0" width="2.700" height="8.500" fill="#fab51e"/><rect x="322.7" y="0" width="2.700" height="8.500" fill="#fbc21e"/><rect x="325.7" y="0" width="2.700" height="8.500" fill="#fcce1e"/><rect x="328.7" y="0" width="2.700" height="8.500" fill="#fdda23"/><rect x="331.7" y="0" width="2.700" height="8.500" fill="#fee433"/><rect x="334.7" y="0" width="2.700" height="8.500" fill="#ffef44"/><rect x="337.7" y="0" width="2.700" height="8.500" fill="#feec66"/><rect x="340.7" y="0" width="2.700" height="8.500" fill="#fde78b"/><rect x="343.7" y="0" width="2.700" height="8.500" fill="#fce5a8"/><rect x="346.7" y="0" width="2.700" height="8.500" fill="#fde6ba"/><rect x="349.7" y="0" width="2.700" height="8.500" fill="#fde8cd"/><rect x="352.7" y="0" width="2.700" height="8.500" fill="#691e7d"/><rect x="355.7" y="0" width="2.700" height="8.500" fill="#76298d"/><rect x="358.7" y="0" width="2.700" height="8.500" fill="#82349e"/><rect x="361.7" y="0" width="2.700" height="8.500" fill="#8f3fab"/><rect x="364.7" y="0" width="2.700" height="8.500" fill="#9c4cb1"/><rect x="367.7" y="0" width="2.700" height="8.500" fill="#a959b6"/><rect x="370.7" y="0" width="2.700" height="8.500" fill="#b468bd"/><rect x="373.7" y="0" width="2.700" height="8.500" fill="#bf7ac4"/><rect x="376.7" y="0" width="2.700" height="8.500" fill="#ca8ccb"/><rect x="379.7" y="0" width="2.700" height="8.500" fill="#d49fd2"/><rect x="382.7" y="0" width="2.700" height="8.500" fill="#deb1da"/><rect x="385.7" y="0" width="2.700" height="8.500" fill="#e8c3e1"/><rect x="388.7" y="0" width="2.700" height="8.500" fill="#5a1c0e"/><rect x="391.7" y="0" width="2.700" height="8.500" fill="#6c2615"/><rect x="394.7" y="0" width="2.700" height="8.500" fill="#7d301c"/><rect x="397.7" y="0" width="2.700" height="8.500" fill="#8e4126"/><rect x="400.7" y="0" width="2.700" height="8.500" fill="#a05230"/><rect x="403.7" y="0" width="2.700" height="8.500" fill="#b26a42"/><rect x="406.7" y="0" width="2.700" height="8.500" fill="#c38255"/><rect x="409.7" y="0" width="2.700" height="8.500" fill="#d2a27a"/><rect x="412.7" y="0" width="2.700" height="8.500" fill="#e1c3a0"/><rect x="415.7" y="0" width="2.700" height="8.500" fill="#e4d2bd"/><rect x="418.7" y="0" width="2.700" height="8.500" fill="#e8e2da"/><rect x="421.7" y="0" width="2.700" height="8.500" fill="#000000"/><rect x="424.7" y="0" width="2.700" height="8.500" fill="#171717"/><rect x="427.7" y="0" width="2.700" height="8.500" fill="#2d2d2d"/><rect x="430.7" y="0" width="2.700" height="8.500" fill="#464646"/><rect x="433.7" y="0" width="2.700" height="8.500" fill="#5f5f5f"/><rect x="436.7" y="0" width="2.700" height="8.500" fill="#787878"/><rect x="439.7" y="0" width="2.700" height="8.500" fill="#919191"/><rect x="442.7" y="0" width="2.700" height="8.500" fill="#a8a8a8"/><rect x="445.7" y="0" width="2.700" height="8.500" fill="#bdbdbd"/><rect x="448.7" y="0" width="2.700" height="8.500" fill="#d0d0d0"/><rect x="451.7" y="0" width="2.700" height="8.500" fill="#e0e0e0"/><rect x="454.7" y="0" width="2.700" height="8.500" fill="#f0f0f0"/></svg>
<div class="b" style="left:0px;top:466px;width:700px;height:21px;background:#336292;"></div>
<span class="t" style="left:8.60px;top:470.34px;font-size:9px;line-height:12px;color:#f2f5fa;transform-origin:0 50%;transform:scaleX(0.8892);text-decoration:underline;">https://www.edrawsoft.com/</span>
<span class="t" style="left:112.00px;top:470.34px;font-size:9px;line-height:12px;color:#f2f5fa;transform-origin:0 50%;transform:scaleX(0.8215);">Page 1/1</span>
<span class="t" style="left:152.50px;top:470.34px;font-size:9px;line-height:12px;color:#f2f5fa;transform-origin:0 50%;transform:scaleX(0.8255);">Shape ID: 171</span>
<span class="t" style="left:206.00px;top:470.34px;font-size:9px;line-height:12px;color:#f2f5fa;transform-origin:0 50%;transform:scaleX(0.8473);">Width: 45.0292mm</span>
<span class="t" style="left:275.70px;top:470.34px;font-size:9px;line-height:12px;color:#f2f5fa;transform-origin:0 50%;transform:scaleX(0.8441);">Height: 45.0292mm</span>
<span class="t" style="left:350.00px;top:470.34px;font-size:9px;line-height:12px;color:#f2f5fa;transform-origin:0 50%;transform:scaleX(0.8014);">Angle: 0deg</span>
<span class="t" style="left:614.00px;top:470.34px;font-size:9px;line-height:12px;color:#f2f5fa;transform-origin:0 50%;transform:scaleX(0.8161);">50%</span>
<svg class="b" style="left:0px;top:0px;" width="700" height="487" viewBox="0 0 700 487">
<rect x="495.700" y="470" width="11" height="10.500" fill="#7f9fc8"/><rect x="497.700" y="472" width="7" height="6.500" fill="none" stroke="#dfe8f5" stroke-width=".8"/>
<rect x="509.500" y="472" width="7" height="6.500" fill="none" stroke="#e6edf7" stroke-width=".8"/><path d="M512 472v6.500M512 474.200h4.500M512 476.400h4.500" stroke="#e6edf7" stroke-width=".7"/>
<rect x="521" y="471.800" width="7.500" height="4.200" fill="none" stroke="#e6edf7" stroke-width=".8"/><path d="M524.750 476v2.500M522.500 479h4.500" stroke="#e6edf7" stroke-width=".8"/>
<path d="M533 476.300h4" stroke="#e6edf7" stroke-width=".9"/>
<path d="M543 476.300h52.500" stroke="#dfe8f5" stroke-width=".8"/><rect x="548.800" y="472" width="2.200" height="8.500" fill="#fff"/>
<path d="M600 476.300h4.500M602.250 474v4.600" stroke="#e6edf7" stroke-width=".9"/>
<path d="M635 475.700h2.400l-1.200 1.400z" fill="#6f8fb8"/>
<rect x="642" y="472.300" width="7.500" height="7" fill="none" stroke="#e6edf7" stroke-width=".8"/><rect x="643.800" y="474" width="4" height="3.600" fill="none" stroke="#e6edf7" stroke-width=".7"/>
<rect x="654" y="472.300" width="3.200" height="3" fill="none" stroke="#e6edf7" stroke-width=".8"/><rect x="658.500" y="472.300" width="3.200" height="3" fill="none" stroke="#e6edf7" stroke-width=".8"/><rect x="654" y="476.500" width="3.200" height="3" fill="none" stroke="#e6edf7" stroke-width=".8"/><rect x="658.500" y="476.500" width="3.200" height="3" fill="none" stroke="#e6edf7" stroke-width=".8"/>
<rect x="665" y="472.300" width="5.500" height="5" fill="none" stroke="#e6edf7" stroke-width=".8"/><path d="M669 476.500l3.200 3.200" stroke="#e6edf7" stroke-width="1.200"/>
<rect x="676.500" y="472.300" width="8" height="7.200" fill="#e6edf7"/><path d="M676.500 474.700h8M676.500 477.100h8M679.200 472.300v7.200M681.900 472.300v7.200" stroke="#336292" stroke-width=".6"/>
<g fill="#b9c9e0"><rect x="695.500" y="483.500" width="1.300" height="1.300"/><rect x="693" y="483.500" width="1.300" height="1.300"/><rect x="690.500" y="483.500" width="1.300" height="1.300"/><rect x="695.500" y="481" width="1.300" height="1.300"/><rect x="693" y="481" width="1.300" height="1.300"/><rect x="695.500" y="478.500" width="1.300" height="1.300"/></g>
</svg>
</body></html>
